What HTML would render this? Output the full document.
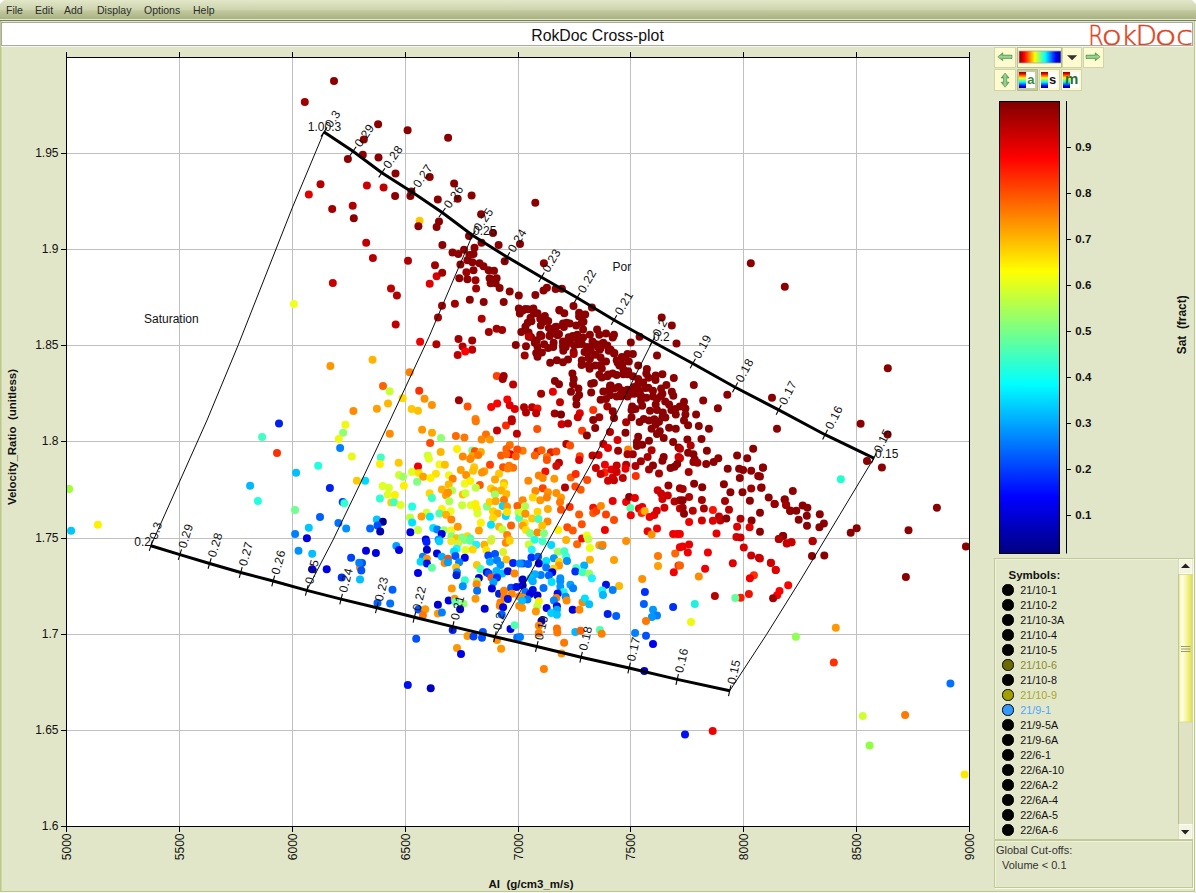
<!DOCTYPE html>
<html><head><meta charset="utf-8"><title>RokDoc Cross-plot</title>
<style>
html,body{margin:0;padding:0}
body{width:1196px;height:893px;overflow:hidden;background:#e2e6c8;font-family:"Liberation Sans",sans-serif;position:relative}
#menubar{position:absolute;left:0;top:0;width:1196px;height:20px;background:linear-gradient(#e2e7c8 0%,#cdd4ae 48%,#c1c99d 54%,#a9b283 95%,#e4e9cb 95%,#e4e9cb 100%);border-bottom:1px solid #76805a}
#menubar span{position:absolute;top:4px;font-size:10.5px;color:#2c2c2c;line-height:13px}
#leftedge{position:absolute;left:0;top:21px;width:1px;height:871px;background:#bcc78b;box-shadow:1px 0 0 #cfd6a9}
#rightedge{position:absolute;left:1194px;top:21px;width:1px;height:871px;background:#bcc78b;box-shadow:1px 0 0 #f6f8ec}
#cornl{position:absolute;left:0;top:0;width:0;height:0;border-top:4px solid #fff;border-right:4px solid transparent}
#cornr{position:absolute;left:1192px;top:0;width:0;height:0;border-top:4px solid #fff;border-left:4px solid transparent}
#bottomedge{position:absolute;left:0;top:891px;width:1195px;height:1px;background:#bcc78b;box-shadow:0 1px 0 #fbfcf6}
#title{position:absolute;left:1px;top:22px;width:1190px;height:22px;background:#fff;border:1px solid #a9a9a9;overflow:hidden;box-shadow:0 1px 0 #f4f6e8}
#title .t{position:absolute;left:0;width:1191px;top:3px;text-align:center;font-size:15.8px;line-height:20px;color:#111}
#logo{position:absolute;left:1089px;top:-6px;font-family:"DejaVu Sans Light","DejaVu Sans",sans-serif;font-weight:200;font-size:27px;line-height:32px;color:#e0421a;white-space:nowrap;letter-spacing:0px}
.btn{position:absolute;background:#fdfbcf;border:1px solid #cdd3a4;box-sizing:border-box}
#legend{position:absolute;left:994px;top:558px;width:199px;height:282px;border:1px solid #c1ca92;box-sizing:border-box;background:#e3e7ca;box-shadow:1px 1px 0 #f7f9ee, inset 1px 1px 0 #eef1dc}
.lr{position:absolute;left:7px;height:15px;line-height:15px;font-size:10.8px;padding-left:18.3px;white-space:nowrap}
.lr i{position:absolute;left:0.4px;top:1.2px;width:9.2px;height:9.2px;border-radius:50%;border:1px solid #000;}
#sym{position:absolute;left:13.5px;top:10px;font-size:11.5px;font-weight:bold;color:#111;line-height:13px}
#sb{position:absolute;left:1178px;top:559px;width:14px;height:280px;background:#dde1c2;border-left:1px solid #c4cb9c;box-sizing:border-box}
#cut{position:absolute;left:994px;top:840px;width:199px;height:48px;border:1px solid #c1ca92;box-shadow:1px 1px 0 #f7f9ee, inset 1px 1px 0 #eef1dc;box-sizing:border-box;font-size:11px;color:#333;line-height:15px}
</style></head><body>
<div id="menubar"><span style="left:6px">File</span><span style="left:35px">Edit</span><span style="left:64px">Add</span><span style="left:97px">Display</span><span style="left:144px">Options</span><span style="left:193px">Help</span></div>
<div id="leftedge"></div><div id="rightedge"></div><div id="bottomedge"></div><div id="cornl"></div><div id="cornr"></div>
<div id="title"><div class="t">RokDoc Cross-plot</div></div>
<svg width="1196" height="893" viewBox="0 0 1196 893" style="position:absolute;left:0;top:0;z-index:5;pointer-events:none" font-family="Liberation Sans, sans-serif">
<rect x="66.5" y="57.5" width="903.0" height="769.0" fill="#fff"/>
<path d="M179.5 57.5V826.5M292.5 57.5V826.5M405.5 57.5V826.5M518.5 57.5V826.5M630.5 57.5V826.5M743.5 57.5V826.5M856.5 57.5V826.5M66.5 730.5H969.5M66.5 634.5H969.5M66.5 538.5H969.5M66.5 441.5H969.5M66.5 345.5H969.5M66.5 249.5H969.5M66.5 153.5H969.5" stroke="#c0c0c0" stroke-width="1" fill="none"/>
<clipPath id="pc"><rect x="67.0" y="58.0" width="902.0" height="768.0"/></clipPath>
<g clip-path="url(#pc)">
<circle cx="576.2" cy="325.4" r="4" fill="#8b0000"/>
<circle cx="614.4" cy="353.1" r="4" fill="#8b0000"/>
<circle cx="530.5" cy="317.7" r="4" fill="#8b0000"/>
<circle cx="540.2" cy="334.8" r="4" fill="#8b0000"/>
<circle cx="621.8" cy="357.1" r="4" fill="#8b0000"/>
<circle cx="543.9" cy="321.2" r="4" fill="#8b0000"/>
<circle cx="632.9" cy="354.0" r="4" fill="#8b0000"/>
<circle cx="528.6" cy="332.5" r="4" fill="#8b0000"/>
<circle cx="599.5" cy="344.6" r="4" fill="#8b0000"/>
<circle cx="660.9" cy="396.1" r="4" fill="#8b0000"/>
<circle cx="655.5" cy="379.9" r="4" fill="#8b0000"/>
<circle cx="643.1" cy="382.6" r="4" fill="#8b0000"/>
<circle cx="622.3" cy="364.8" r="4" fill="#8b0000"/>
<circle cx="669.1" cy="427.8" r="4" fill="#8b0000"/>
<circle cx="603.3" cy="391.6" r="4" fill="#8b0000"/>
<circle cx="548.2" cy="321.1" r="4" fill="#8b0000"/>
<circle cx="665.4" cy="417.4" r="4" fill="#8b0000"/>
<circle cx="568.0" cy="359.5" r="4" fill="#8b0000"/>
<circle cx="549.6" cy="335.9" r="4" fill="#8b0000"/>
<circle cx="610.7" cy="385.6" r="4" fill="#8b0000"/>
<circle cx="679.8" cy="406.6" r="4" fill="#8b0000"/>
<circle cx="675.3" cy="408.9" r="4" fill="#8b0000"/>
<circle cx="588.5" cy="357.4" r="4" fill="#8b0000"/>
<circle cx="555.5" cy="326.9" r="4" fill="#8b0000"/>
<circle cx="579.1" cy="312.8" r="4" fill="#8b0000"/>
<circle cx="536.2" cy="352.9" r="4" fill="#8b0000"/>
<circle cx="563.3" cy="350.8" r="4" fill="#8b0000"/>
<circle cx="583.5" cy="321.8" r="4" fill="#8b0000"/>
<circle cx="601.8" cy="368.4" r="4" fill="#8b0000"/>
<circle cx="579.6" cy="340.1" r="4" fill="#8b0000"/>
<circle cx="673.3" cy="395.8" r="4" fill="#8b0000"/>
<circle cx="577.3" cy="334.7" r="4" fill="#8b0000"/>
<circle cx="671.4" cy="409.9" r="4" fill="#8b0000"/>
<circle cx="665.2" cy="401.4" r="4" fill="#8b0000"/>
<circle cx="557.6" cy="335.2" r="4" fill="#8b0000"/>
<circle cx="553.3" cy="332.3" r="4" fill="#8b0000"/>
<circle cx="635.5" cy="409.1" r="4" fill="#8b0000"/>
<circle cx="540.8" cy="325.5" r="4" fill="#8b0000"/>
<circle cx="563.2" cy="343.8" r="4" fill="#8b0000"/>
<circle cx="581.6" cy="365.1" r="4" fill="#8b0000"/>
<circle cx="608.2" cy="374.6" r="4" fill="#8b0000"/>
<circle cx="597.1" cy="329.6" r="4" fill="#8b0000"/>
<circle cx="648.5" cy="377.7" r="4" fill="#8b0000"/>
<circle cx="628.2" cy="371.2" r="4" fill="#8b0000"/>
<circle cx="610.1" cy="395.3" r="4" fill="#8b0000"/>
<circle cx="599.3" cy="374.7" r="4" fill="#8b0000"/>
<circle cx="643.8" cy="419.0" r="4" fill="#8b0000"/>
<circle cx="531.0" cy="337.0" r="4" fill="#8b0000"/>
<circle cx="659.0" cy="421.7" r="4" fill="#8b0000"/>
<circle cx="589.6" cy="368.8" r="4" fill="#8b0000"/>
<circle cx="610.7" cy="349.7" r="4" fill="#8b0000"/>
<circle cx="553.2" cy="347.1" r="4" fill="#8b0000"/>
<circle cx="617.7" cy="362.8" r="4" fill="#8b0000"/>
<circle cx="659.8" cy="431.3" r="4" fill="#8b0000"/>
<circle cx="536.8" cy="340.2" r="4" fill="#8b0000"/>
<circle cx="566.6" cy="322.7" r="4" fill="#8b0000"/>
<circle cx="620.6" cy="396.3" r="4" fill="#8b0000"/>
<circle cx="534.0" cy="313.4" r="4" fill="#8b0000"/>
<circle cx="599.6" cy="349.7" r="4" fill="#8b0000"/>
<circle cx="612.8" cy="336.7" r="4" fill="#8b0000"/>
<circle cx="574.1" cy="345.3" r="4" fill="#8b0000"/>
<circle cx="645.1" cy="388.0" r="4" fill="#8b0000"/>
<circle cx="590.8" cy="350.8" r="4" fill="#8b0000"/>
<circle cx="527.7" cy="322.7" r="4" fill="#8b0000"/>
<circle cx="563.9" cy="327.0" r="4" fill="#8b0000"/>
<circle cx="568.7" cy="337.2" r="4" fill="#8b0000"/>
<circle cx="573.6" cy="352.0" r="4" fill="#8b0000"/>
<circle cx="525.4" cy="308.9" r="4" fill="#8b0000"/>
<circle cx="572.7" cy="336.0" r="4" fill="#8b0000"/>
<circle cx="623.3" cy="374.2" r="4" fill="#8b0000"/>
<circle cx="653.0" cy="390.8" r="4" fill="#8b0000"/>
<circle cx="650.0" cy="410.7" r="4" fill="#8b0000"/>
<circle cx="662.8" cy="412.6" r="4" fill="#8b0000"/>
<circle cx="640.8" cy="395.4" r="4" fill="#8b0000"/>
<circle cx="559.3" cy="310.0" r="4" fill="#8b0000"/>
<circle cx="541.9" cy="352.5" r="4" fill="#8b0000"/>
<circle cx="618.5" cy="386.9" r="4" fill="#8b0000"/>
<circle cx="630.6" cy="393.8" r="4" fill="#8b0000"/>
<circle cx="334.0" cy="81.0" r="4" fill="#8b0000"/>
<circle cx="304.8" cy="102.1" r="4" fill="#a00000"/>
<circle cx="378.1" cy="124.3" r="4" fill="#8b0000"/>
<circle cx="407.6" cy="130.3" r="4" fill="#8b0000"/>
<circle cx="448.1" cy="137.8" r="4" fill="#8b0000"/>
<circle cx="363.8" cy="139.6" r="4" fill="#8b0000"/>
<circle cx="362.8" cy="154.7" r="4" fill="#8b0000"/>
<circle cx="347.9" cy="158.9" r="4" fill="#8b0000"/>
<circle cx="378.5" cy="157.5" r="4" fill="#8b0000"/>
<circle cx="395.5" cy="173.5" r="4" fill="#8b0000"/>
<circle cx="429.7" cy="177.1" r="4" fill="#8b0000"/>
<circle cx="454.1" cy="183.5" r="4" fill="#8b0000"/>
<circle cx="320.5" cy="184.3" r="4" fill="#b00000"/>
<circle cx="366.9" cy="185.5" r="4" fill="#d00000"/>
<circle cx="383.6" cy="187.4" r="4" fill="#c00000"/>
<circle cx="308.8" cy="194.6" r="4" fill="#e00000"/>
<circle cx="411.4" cy="191.4" r="4" fill="#8b0000"/>
<circle cx="410.4" cy="196.0" r="4" fill="#8b0000"/>
<circle cx="395.1" cy="196.0" r="4" fill="#8b0000"/>
<circle cx="437.8" cy="199.6" r="4" fill="#8b0000"/>
<circle cx="457.7" cy="198.8" r="4" fill="#8b0000"/>
<circle cx="471.6" cy="195.6" r="4" fill="#8b0000"/>
<circle cx="352.7" cy="205.7" r="4" fill="#b00000"/>
<circle cx="332.2" cy="209.1" r="4" fill="#a00000"/>
<circle cx="353.8" cy="218.2" r="4" fill="#8b0000"/>
<circle cx="481.1" cy="214.2" r="4" fill="#8b0000"/>
<circle cx="419.6" cy="220.8" r="4" fill="#ffc800"/>
<circle cx="418.4" cy="226.2" r="4" fill="#8b0000"/>
<circle cx="439.0" cy="221.4" r="4" fill="#8b0000"/>
<circle cx="436.6" cy="226.9" r="4" fill="#8b0000"/>
<circle cx="493.0" cy="232.9" r="4" fill="#8b0000"/>
<circle cx="469.0" cy="235.9" r="4" fill="#8b0000"/>
<circle cx="535.3" cy="202.7" r="4" fill="#8b0000"/>
<circle cx="366.2" cy="242.8" r="4" fill="#c00000"/>
<circle cx="372.9" cy="258.1" r="4" fill="#b40000"/>
<circle cx="408.0" cy="260.8" r="4" fill="#b00000"/>
<circle cx="332.8" cy="282.9" r="4" fill="#c80000"/>
<circle cx="391.0" cy="288.6" r="4" fill="#c00000"/>
<circle cx="396.9" cy="295.6" r="4" fill="#b40000"/>
<circle cx="293.9" cy="303.9" r="4" fill="#f0ff20"/>
<circle cx="395.7" cy="324.6" r="4" fill="#c00000"/>
<circle cx="420.1" cy="341.8" r="4" fill="#f00000"/>
<circle cx="436.4" cy="344.2" r="4" fill="#b00000"/>
<circle cx="429.7" cy="283.7" r="4" fill="#e00000"/>
<circle cx="436.6" cy="276.3" r="4" fill="#d80000"/>
<circle cx="442.2" cy="272.8" r="4" fill="#a00000"/>
<circle cx="435.0" cy="265.2" r="4" fill="#a00000"/>
<circle cx="442.4" cy="245.0" r="4" fill="#8b0000"/>
<circle cx="452.5" cy="252.5" r="4" fill="#8b0000"/>
<circle cx="458.3" cy="254.1" r="4" fill="#8b0000"/>
<circle cx="464.0" cy="249.7" r="4" fill="#8b0000"/>
<circle cx="474.5" cy="247.7" r="4" fill="#8b0000"/>
<circle cx="481.5" cy="242.8" r="4" fill="#8b0000"/>
<circle cx="498.6" cy="245.0" r="4" fill="#8b0000"/>
<circle cx="469.4" cy="255.1" r="4" fill="#8b0000"/>
<circle cx="473.5" cy="254.1" r="4" fill="#8b0000"/>
<circle cx="467.4" cy="260.2" r="4" fill="#8b0000"/>
<circle cx="460.4" cy="264.6" r="4" fill="#8b0000"/>
<circle cx="472.4" cy="262.2" r="4" fill="#8b0000"/>
<circle cx="479.5" cy="263.2" r="4" fill="#8b0000"/>
<circle cx="483.5" cy="266.2" r="4" fill="#8b0000"/>
<circle cx="488.6" cy="270.2" r="4" fill="#8b0000"/>
<circle cx="494.0" cy="270.8" r="4" fill="#8b0000"/>
<circle cx="466.4" cy="272.2" r="4" fill="#a00000"/>
<circle cx="473.5" cy="270.2" r="4" fill="#8b0000"/>
<circle cx="459.3" cy="278.3" r="4" fill="#8b0000"/>
<circle cx="467.4" cy="279.3" r="4" fill="#8b0000"/>
<circle cx="475.5" cy="280.3" r="4" fill="#a00000"/>
<circle cx="489.6" cy="278.3" r="4" fill="#8b0000"/>
<circle cx="496.6" cy="278.3" r="4" fill="#8b0000"/>
<circle cx="490.6" cy="283.3" r="4" fill="#8b0000"/>
<circle cx="495.6" cy="283.3" r="4" fill="#8b0000"/>
<circle cx="499.6" cy="288.0" r="4" fill="#8b0000"/>
<circle cx="476.1" cy="288.6" r="4" fill="#a00000"/>
<circle cx="509.7" cy="291.4" r="4" fill="#8b0000"/>
<circle cx="504.7" cy="261.2" r="4" fill="#8b0000"/>
<circle cx="518.8" cy="295.4" r="4" fill="#8b0000"/>
<circle cx="469.8" cy="299.8" r="4" fill="#8b0000"/>
<circle cx="483.7" cy="301.9" r="4" fill="#8b0000"/>
<circle cx="503.7" cy="302.1" r="4" fill="#8b0000"/>
<circle cx="454.9" cy="303.7" r="4" fill="#a00000"/>
<circle cx="442.0" cy="305.7" r="4" fill="#a00000"/>
<circle cx="518.8" cy="308.5" r="4" fill="#8b0000"/>
<circle cx="519.8" cy="313.6" r="4" fill="#8b0000"/>
<circle cx="438.0" cy="317.6" r="4" fill="#a80000"/>
<circle cx="481.7" cy="318.8" r="4" fill="#b00000"/>
<circle cx="496.6" cy="328.7" r="4" fill="#a00000"/>
<circle cx="502.1" cy="330.1" r="4" fill="#a00000"/>
<circle cx="488.8" cy="332.1" r="4" fill="#a00000"/>
<circle cx="458.5" cy="338.9" r="4" fill="#a00000"/>
<circle cx="472.2" cy="340.4" r="4" fill="#a00000"/>
<circle cx="515.8" cy="345.0" r="4" fill="#8b0000"/>
<circle cx="462.6" cy="346.4" r="4" fill="#b00000"/>
<circle cx="472.2" cy="349.8" r="4" fill="#c00000"/>
<circle cx="465.2" cy="351.4" r="4" fill="#ff0000"/>
<circle cx="457.7" cy="354.9" r="4" fill="#c00000"/>
<circle cx="372.5" cy="359.7" r="4" fill="#ffb400"/>
<circle cx="330.4" cy="365.9" r="4" fill="#ff9600"/>
<circle cx="409.6" cy="372.2" r="4" fill="#ff8000"/>
<circle cx="496.8" cy="376.0" r="4" fill="#ff4000"/>
<circle cx="503.7" cy="376.0" r="4" fill="#a00000"/>
<circle cx="502.7" cy="379.0" r="4" fill="#a00000"/>
<circle cx="513.1" cy="384.5" r="4" fill="#c00000"/>
<circle cx="383.0" cy="385.9" r="4" fill="#ff6000"/>
<circle cx="389.6" cy="391.3" r="4" fill="#c8ff30"/>
<circle cx="419.2" cy="390.7" r="4" fill="#ff3000"/>
<circle cx="402.7" cy="398.2" r="4" fill="#ffd800"/>
<circle cx="424.5" cy="398.8" r="4" fill="#ff9000"/>
<circle cx="507.3" cy="399.4" r="4" fill="#ff0000"/>
<circle cx="458.9" cy="400.2" r="4" fill="#a00000"/>
<circle cx="388.0" cy="403.4" r="4" fill="#ffb800"/>
<circle cx="431.9" cy="405.0" r="4" fill="#ff9000"/>
<circle cx="497.2" cy="403.4" r="4" fill="#ff0000"/>
<circle cx="491.2" cy="406.9" r="4" fill="#ff0000"/>
<circle cx="509.7" cy="405.2" r="4" fill="#e00000"/>
<circle cx="467.6" cy="406.4" r="4" fill="#ff5000"/>
<circle cx="376.9" cy="408.7" r="4" fill="#ffa000"/>
<circle cx="411.6" cy="408.9" r="4" fill="#ffc800"/>
<circle cx="418.0" cy="410.7" r="4" fill="#ffc000"/>
<circle cx="353.4" cy="411.1" r="4" fill="#ff8c00"/>
<circle cx="514.8" cy="408.9" r="4" fill="#e00000"/>
<circle cx="475.5" cy="418.9" r="4" fill="#ff8000"/>
<circle cx="511.7" cy="419.3" r="4" fill="#b40000"/>
<circle cx="520.0" cy="244.1" r="4" fill="#8b0000"/>
<circle cx="543.9" cy="263.2" r="4" fill="#8b0000"/>
<circle cx="546.9" cy="287.8" r="4" fill="#8b0000"/>
<circle cx="543.5" cy="290.5" r="4" fill="#8b0000"/>
<circle cx="535.4" cy="294.9" r="4" fill="#8b0000"/>
<circle cx="555.6" cy="289.1" r="4" fill="#8b0000"/>
<circle cx="561.9" cy="288.7" r="4" fill="#8b0000"/>
<circle cx="573.5" cy="305.9" r="4" fill="#8b0000"/>
<circle cx="591.9" cy="307.5" r="4" fill="#8b0000"/>
<circle cx="559.6" cy="310.6" r="4" fill="#8b0000"/>
<circle cx="564.3" cy="313.3" r="4" fill="#8b0000"/>
<circle cx="585.2" cy="314.6" r="4" fill="#8b0000"/>
<circle cx="579.1" cy="316.6" r="4" fill="#8b0000"/>
<circle cx="528.1" cy="309.3" r="4" fill="#8b0000"/>
<circle cx="533.4" cy="308.6" r="4" fill="#8b0000"/>
<circle cx="537.5" cy="313.3" r="4" fill="#8b0000"/>
<circle cx="544.9" cy="316.0" r="4" fill="#8b0000"/>
<circle cx="522.7" cy="310.6" r="4" fill="#8b0000"/>
<circle cx="540.2" cy="318.7" r="4" fill="#8b0000"/>
<circle cx="531.4" cy="321.3" r="4" fill="#8b0000"/>
<circle cx="525.4" cy="326.7" r="4" fill="#8b0000"/>
<circle cx="521.3" cy="332.1" r="4" fill="#8b0000"/>
<circle cx="581.8" cy="322.7" r="4" fill="#8b0000"/>
<circle cx="583.1" cy="329.4" r="4" fill="#8b0000"/>
<circle cx="569.7" cy="323.4" r="4" fill="#8b0000"/>
<circle cx="563.0" cy="323.4" r="4" fill="#8b0000"/>
<circle cx="556.3" cy="326.7" r="4" fill="#8b0000"/>
<circle cx="548.9" cy="328.1" r="4" fill="#8b0000"/>
<circle cx="550.2" cy="334.8" r="4" fill="#8b0000"/>
<circle cx="559.0" cy="334.1" r="4" fill="#8b0000"/>
<circle cx="541.5" cy="336.1" r="4" fill="#8b0000"/>
<circle cx="528.7" cy="336.8" r="4" fill="#b40000"/>
<circle cx="534.8" cy="342.8" r="4" fill="#8b0000"/>
<circle cx="526.0" cy="346.2" r="4" fill="#8b0000"/>
<circle cx="544.2" cy="344.2" r="4" fill="#8b0000"/>
<circle cx="553.6" cy="342.8" r="4" fill="#8b0000"/>
<circle cx="563.0" cy="341.5" r="4" fill="#8b0000"/>
<circle cx="565.7" cy="346.9" r="4" fill="#8b0000"/>
<circle cx="573.7" cy="337.5" r="4" fill="#8b0000"/>
<circle cx="577.8" cy="344.2" r="4" fill="#8b0000"/>
<circle cx="583.1" cy="337.5" r="4" fill="#8b0000"/>
<circle cx="589.9" cy="334.8" r="4" fill="#8b0000"/>
<circle cx="592.5" cy="341.5" r="4" fill="#8b0000"/>
<circle cx="599.3" cy="334.8" r="4" fill="#8b0000"/>
<circle cx="606.0" cy="333.4" r="4" fill="#8b0000"/>
<circle cx="614.0" cy="334.8" r="4" fill="#8b0000"/>
<circle cx="612.7" cy="337.5" r="4" fill="#8b0000"/>
<circle cx="603.3" cy="342.8" r="4" fill="#8b0000"/>
<circle cx="607.3" cy="345.5" r="4" fill="#8b0000"/>
<circle cx="597.9" cy="346.9" r="4" fill="#8b0000"/>
<circle cx="587.2" cy="346.9" r="4" fill="#8b0000"/>
<circle cx="630.8" cy="342.6" r="4" fill="#8b0000"/>
<circle cx="639.6" cy="336.8" r="4" fill="#8b0000"/>
<circle cx="661.7" cy="317.6" r="4" fill="#8b0000"/>
<circle cx="671.8" cy="325.6" r="4" fill="#8b0000"/>
<circle cx="676.5" cy="343.5" r="4" fill="#8b0000"/>
<circle cx="524.7" cy="355.4" r="4" fill="#a00000"/>
<circle cx="537.5" cy="346.7" r="4" fill="#8b0000"/>
<circle cx="537.5" cy="356.8" r="4" fill="#8b0000"/>
<circle cx="548.2" cy="348.1" r="4" fill="#8b0000"/>
<circle cx="563.0" cy="346.7" r="4" fill="#8b0000"/>
<circle cx="569.7" cy="342.7" r="4" fill="#8b0000"/>
<circle cx="573.7" cy="354.1" r="4" fill="#a80000"/>
<circle cx="581.8" cy="344.0" r="4" fill="#8b0000"/>
<circle cx="584.5" cy="352.1" r="4" fill="#8b0000"/>
<circle cx="589.9" cy="348.1" r="4" fill="#8b0000"/>
<circle cx="595.2" cy="344.0" r="4" fill="#8b0000"/>
<circle cx="600.6" cy="348.1" r="4" fill="#8b0000"/>
<circle cx="608.7" cy="350.7" r="4" fill="#8b0000"/>
<circle cx="595.2" cy="354.8" r="4" fill="#8b0000"/>
<circle cx="589.9" cy="358.8" r="4" fill="#8b0000"/>
<circle cx="581.8" cy="360.2" r="4" fill="#8b0000"/>
<circle cx="600.6" cy="357.5" r="4" fill="#8b0000"/>
<circle cx="606.0" cy="361.5" r="4" fill="#8b0000"/>
<circle cx="614.0" cy="353.4" r="4" fill="#8b0000"/>
<circle cx="616.7" cy="360.2" r="4" fill="#8b0000"/>
<circle cx="627.5" cy="354.1" r="4" fill="#8b0000"/>
<circle cx="624.8" cy="357.5" r="4" fill="#8b0000"/>
<circle cx="628.8" cy="361.5" r="4" fill="#8b0000"/>
<circle cx="657.0" cy="355.4" r="4" fill="#8b0000"/>
<circle cx="550.2" cy="362.8" r="4" fill="#8b0000"/>
<circle cx="556.9" cy="360.2" r="4" fill="#8b0000"/>
<circle cx="563.0" cy="362.2" r="4" fill="#8b0000"/>
<circle cx="588.5" cy="364.9" r="4" fill="#8b0000"/>
<circle cx="595.2" cy="365.5" r="4" fill="#8b0000"/>
<circle cx="600.6" cy="364.9" r="4" fill="#8b0000"/>
<circle cx="619.4" cy="365.5" r="4" fill="#8b0000"/>
<circle cx="623.4" cy="369.6" r="4" fill="#8b0000"/>
<circle cx="638.2" cy="365.5" r="4" fill="#8b0000"/>
<circle cx="646.9" cy="368.9" r="4" fill="#8b0000"/>
<circle cx="646.3" cy="373.6" r="4" fill="#8b0000"/>
<circle cx="572.4" cy="373.6" r="4" fill="#8b0000"/>
<circle cx="573.7" cy="379.0" r="4" fill="#8b0000"/>
<circle cx="573.1" cy="384.3" r="4" fill="#8b0000"/>
<circle cx="554.9" cy="381.0" r="4" fill="#8b0000"/>
<circle cx="559.0" cy="384.3" r="4" fill="#8b0000"/>
<circle cx="601.9" cy="377.6" r="4" fill="#8b0000"/>
<circle cx="607.3" cy="376.3" r="4" fill="#8b0000"/>
<circle cx="612.7" cy="373.6" r="4" fill="#8b0000"/>
<circle cx="616.7" cy="374.9" r="4" fill="#8b0000"/>
<circle cx="627.5" cy="374.3" r="4" fill="#8b0000"/>
<circle cx="632.8" cy="376.3" r="4" fill="#8b0000"/>
<circle cx="638.2" cy="379.0" r="4" fill="#8b0000"/>
<circle cx="655.7" cy="375.6" r="4" fill="#8b0000"/>
<circle cx="662.4" cy="374.3" r="4" fill="#8b0000"/>
<circle cx="673.8" cy="378.0" r="4" fill="#8b0000"/>
<circle cx="552.9" cy="391.7" r="4" fill="#e80000"/>
<circle cx="541.1" cy="393.7" r="4" fill="#a00000"/>
<circle cx="571.0" cy="391.7" r="4" fill="#8b0000"/>
<circle cx="578.4" cy="388.4" r="4" fill="#8b0000"/>
<circle cx="579.1" cy="395.1" r="4" fill="#8b0000"/>
<circle cx="576.4" cy="398.4" r="4" fill="#8b0000"/>
<circle cx="576.4" cy="404.5" r="4" fill="#8b0000"/>
<circle cx="591.2" cy="383.7" r="4" fill="#8b0000"/>
<circle cx="593.9" cy="383.0" r="4" fill="#8b0000"/>
<circle cx="591.2" cy="392.4" r="4" fill="#8b0000"/>
<circle cx="610.0" cy="385.7" r="4" fill="#8b0000"/>
<circle cx="614.0" cy="388.4" r="4" fill="#8b0000"/>
<circle cx="608.7" cy="390.4" r="4" fill="#8b0000"/>
<circle cx="622.1" cy="390.4" r="4" fill="#8b0000"/>
<circle cx="627.5" cy="389.7" r="4" fill="#8b0000"/>
<circle cx="634.2" cy="387.0" r="4" fill="#8b0000"/>
<circle cx="638.2" cy="384.3" r="4" fill="#8b0000"/>
<circle cx="616.7" cy="396.4" r="4" fill="#8b0000"/>
<circle cx="620.8" cy="393.7" r="4" fill="#8b0000"/>
<circle cx="627.5" cy="396.4" r="4" fill="#8b0000"/>
<circle cx="634.2" cy="393.7" r="4" fill="#8b0000"/>
<circle cx="639.6" cy="391.0" r="4" fill="#8b0000"/>
<circle cx="648.3" cy="387.7" r="4" fill="#8b0000"/>
<circle cx="661.1" cy="388.4" r="4" fill="#8b0000"/>
<circle cx="666.4" cy="385.0" r="4" fill="#8b0000"/>
<circle cx="671.8" cy="391.7" r="4" fill="#8b0000"/>
<circle cx="662.4" cy="393.7" r="4" fill="#8b0000"/>
<circle cx="653.0" cy="396.4" r="4" fill="#8b0000"/>
<circle cx="657.0" cy="399.1" r="4" fill="#8b0000"/>
<circle cx="560.0" cy="402.2" r="4" fill="#c00000"/>
<circle cx="524.0" cy="407.2" r="4" fill="#b00000"/>
<circle cx="532.1" cy="407.2" r="4" fill="#b80000"/>
<circle cx="537.5" cy="408.5" r="4" fill="#f01000"/>
<circle cx="526.0" cy="412.5" r="4" fill="#b00000"/>
<circle cx="536.1" cy="413.2" r="4" fill="#c00000"/>
<circle cx="600.6" cy="399.8" r="4" fill="#8b0000"/>
<circle cx="606.0" cy="399.1" r="4" fill="#8b0000"/>
<circle cx="607.3" cy="406.5" r="4" fill="#a80000"/>
<circle cx="593.2" cy="409.9" r="4" fill="#ff3000"/>
<circle cx="612.7" cy="411.2" r="4" fill="#8b0000"/>
<circle cx="614.0" cy="417.9" r="4" fill="#8b0000"/>
<circle cx="632.2" cy="406.5" r="4" fill="#8b0000"/>
<circle cx="631.5" cy="409.9" r="4" fill="#8b0000"/>
<circle cx="640.9" cy="400.5" r="4" fill="#8b0000"/>
<circle cx="642.2" cy="405.8" r="4" fill="#8b0000"/>
<circle cx="646.3" cy="397.8" r="4" fill="#8b0000"/>
<circle cx="655.7" cy="404.5" r="4" fill="#8b0000"/>
<circle cx="657.0" cy="409.9" r="4" fill="#8b0000"/>
<circle cx="669.1" cy="404.5" r="4" fill="#8b0000"/>
<circle cx="675.8" cy="414.6" r="4" fill="#8b0000"/>
<circle cx="554.7" cy="413.5" r="4" fill="#a00000"/>
<circle cx="561.0" cy="414.6" r="4" fill="#800000"/>
<circle cx="579.8" cy="413.2" r="4" fill="#e00000"/>
<circle cx="577.8" cy="417.2" r="4" fill="#c80000"/>
<circle cx="599.3" cy="417.2" r="4" fill="#a00000"/>
<circle cx="593.2" cy="419.9" r="4" fill="#8b0000"/>
<circle cx="561.6" cy="424.2" r="4" fill="#d00000"/>
<circle cx="568.0" cy="423.6" r="4" fill="#b00000"/>
<circle cx="595.2" cy="428.0" r="4" fill="#8b0000"/>
<circle cx="626.1" cy="422.2" r="4" fill="#a80000"/>
<circle cx="631.5" cy="417.2" r="4" fill="#8b0000"/>
<circle cx="639.6" cy="421.9" r="4" fill="#8b0000"/>
<circle cx="649.0" cy="420.6" r="4" fill="#8b0000"/>
<circle cx="654.3" cy="419.3" r="4" fill="#8b0000"/>
<circle cx="662.4" cy="417.2" r="4" fill="#8b0000"/>
<circle cx="655.7" cy="424.6" r="4" fill="#8b0000"/>
<circle cx="651.6" cy="428.7" r="4" fill="#8b0000"/>
<circle cx="675.8" cy="428.7" r="4" fill="#8b0000"/>
<circle cx="537.2" cy="429.1" r="4" fill="#ff5000"/>
<circle cx="582.1" cy="430.7" r="4" fill="#ff3800"/>
<circle cx="586.9" cy="435.6" r="4" fill="#8b0000"/>
<circle cx="610.0" cy="432.0" r="4" fill="#b00000"/>
<circle cx="625.5" cy="432.7" r="4" fill="#8b0000"/>
<circle cx="617.5" cy="440.1" r="4" fill="#d80000"/>
<circle cx="638.2" cy="436.7" r="4" fill="#8b0000"/>
<circle cx="636.9" cy="442.1" r="4" fill="#8b0000"/>
<circle cx="657.0" cy="434.0" r="4" fill="#8b0000"/>
<circle cx="663.7" cy="438.1" r="4" fill="#8b0000"/>
<circle cx="649.0" cy="440.8" r="4" fill="#8b0000"/>
<circle cx="673.1" cy="442.1" r="4" fill="#8b0000"/>
<circle cx="566.3" cy="444.1" r="4" fill="#b00000"/>
<circle cx="570.1" cy="445.5" r="4" fill="#ff5000"/>
<circle cx="603.3" cy="444.1" r="4" fill="#c00000"/>
<circle cx="608.0" cy="448.1" r="4" fill="#e80000"/>
<circle cx="522.7" cy="450.8" r="4" fill="#ff7800"/>
<circle cx="537.5" cy="451.5" r="4" fill="#e02000"/>
<circle cx="541.5" cy="450.2" r="4" fill="#ff6000"/>
<circle cx="550.9" cy="452.2" r="4" fill="#e02000"/>
<circle cx="556.3" cy="451.5" r="4" fill="#ff4800"/>
<circle cx="534.8" cy="455.5" r="4" fill="#ff6000"/>
<circle cx="546.9" cy="456.9" r="4" fill="#ff7000"/>
<circle cx="579.8" cy="456.2" r="4" fill="#ff4000"/>
<circle cx="592.5" cy="455.5" r="4" fill="#c00000"/>
<circle cx="598.6" cy="454.9" r="4" fill="#d80000"/>
<circle cx="618.1" cy="450.8" r="4" fill="#a00000"/>
<circle cx="628.1" cy="449.5" r="4" fill="#ff8000"/>
<circle cx="627.5" cy="454.2" r="4" fill="#a80000"/>
<circle cx="632.8" cy="454.2" r="4" fill="#a00000"/>
<circle cx="636.9" cy="446.1" r="4" fill="#8b0000"/>
<circle cx="642.2" cy="444.8" r="4" fill="#8b0000"/>
<circle cx="651.6" cy="450.2" r="4" fill="#b00000"/>
<circle cx="647.6" cy="456.9" r="4" fill="#a80000"/>
<circle cx="663.7" cy="456.9" r="4" fill="#8b0000"/>
<circle cx="678.5" cy="447.5" r="4" fill="#8b0000"/>
<circle cx="678.5" cy="456.9" r="4" fill="#c00000"/>
<circle cx="750.8" cy="263.2" r="4" fill="#8b0000"/>
<circle cx="784.8" cy="286.7" r="4" fill="#8b0000"/>
<circle cx="693.8" cy="385.0" r="4" fill="#8b0000"/>
<circle cx="727.3" cy="394.7" r="4" fill="#8b0000"/>
<circle cx="772.0" cy="397.8" r="4" fill="#8b0000"/>
<circle cx="703.2" cy="400.5" r="4" fill="#8b0000"/>
<circle cx="717.9" cy="408.2" r="4" fill="#8b0000"/>
<circle cx="684.0" cy="401.8" r="4" fill="#8b0000"/>
<circle cx="685.4" cy="408.5" r="4" fill="#8b0000"/>
<circle cx="685.4" cy="414.6" r="4" fill="#8b0000"/>
<circle cx="696.1" cy="414.6" r="4" fill="#8b0000"/>
<circle cx="684.0" cy="420.6" r="4" fill="#8b0000"/>
<circle cx="688.1" cy="425.3" r="4" fill="#8b0000"/>
<circle cx="698.8" cy="426.0" r="4" fill="#8b0000"/>
<circle cx="708.9" cy="428.7" r="4" fill="#8b0000"/>
<circle cx="777.0" cy="428.7" r="4" fill="#8b0000"/>
<circle cx="687.4" cy="439.4" r="4" fill="#8b0000"/>
<circle cx="701.5" cy="439.1" r="4" fill="#8b0000"/>
<circle cx="690.7" cy="445.5" r="4" fill="#b00000"/>
<circle cx="753.2" cy="448.8" r="4" fill="#8b0000"/>
<circle cx="706.9" cy="450.8" r="4" fill="#8b0000"/>
<circle cx="688.1" cy="452.8" r="4" fill="#8b0000"/>
<circle cx="693.4" cy="454.2" r="4" fill="#8b0000"/>
<circle cx="737.1" cy="455.5" r="4" fill="#8b0000"/>
<circle cx="718.3" cy="458.2" r="4" fill="#8b0000"/>
<circle cx="747.2" cy="458.2" r="4" fill="#8b0000"/>
<circle cx="680.0" cy="448.8" r="4" fill="#b40000"/>
<circle cx="694.8" cy="459.6" r="4" fill="#8b0000"/>
<circle cx="680.0" cy="458.2" r="4" fill="#d00000"/>
<circle cx="887.8" cy="368.2" r="4" fill="#8b0000"/>
<circle cx="860.6" cy="423.8" r="4" fill="#8b0000"/>
<circle cx="887.6" cy="434.5" r="4" fill="#8b0000"/>
<circle cx="867.0" cy="460.9" r="4" fill="#8b0000"/>
<circle cx="881.9" cy="467.6" r="4" fill="#8b0000"/>
<circle cx="840.8" cy="479.2" r="4" fill="#20ffd0"/>
<circle cx="763.0" cy="467.8" r="4" fill="#8b0000"/>
<circle cx="760.0" cy="476.4" r="4" fill="#8b0000"/>
<circle cx="761.6" cy="487.5" r="4" fill="#8b0000"/>
<circle cx="792.8" cy="490.9" r="4" fill="#8b0000"/>
<circle cx="768.7" cy="497.6" r="4" fill="#8b0000"/>
<circle cx="784.6" cy="499.6" r="4" fill="#8b0000"/>
<circle cx="774.5" cy="504.0" r="4" fill="#8b0000"/>
<circle cx="786.2" cy="505.0" r="4" fill="#8b0000"/>
<circle cx="802.7" cy="505.6" r="4" fill="#8b0000"/>
<circle cx="807.4" cy="507.7" r="4" fill="#8b0000"/>
<circle cx="790.2" cy="511.1" r="4" fill="#8b0000"/>
<circle cx="796.3" cy="510.7" r="4" fill="#8b0000"/>
<circle cx="760.0" cy="512.7" r="4" fill="#8b0000"/>
<circle cx="806.8" cy="515.7" r="4" fill="#8b0000"/>
<circle cx="819.8" cy="514.3" r="4" fill="#8b0000"/>
<circle cx="798.7" cy="519.7" r="4" fill="#8b0000"/>
<circle cx="823.9" cy="523.4" r="4" fill="#8b0000"/>
<circle cx="807.0" cy="525.8" r="4" fill="#8b0000"/>
<circle cx="819.4" cy="527.2" r="4" fill="#8b0000"/>
<circle cx="856.7" cy="528.2" r="4" fill="#8b0000"/>
<circle cx="850.7" cy="532.8" r="4" fill="#8b0000"/>
<circle cx="936.9" cy="507.7" r="4" fill="#8b0000"/>
<circle cx="908.5" cy="530.2" r="4" fill="#8b0000"/>
<circle cx="760.0" cy="531.8" r="4" fill="#8b0000"/>
<circle cx="782.8" cy="535.9" r="4" fill="#980000"/>
<circle cx="778.7" cy="538.9" r="4" fill="#b80000"/>
<circle cx="786.8" cy="543.3" r="4" fill="#d80000"/>
<circle cx="791.6" cy="542.3" r="4" fill="#d00000"/>
<circle cx="812.6" cy="541.1" r="4" fill="#c80000"/>
<circle cx="965.9" cy="546.5" r="4" fill="#8b0000"/>
<circle cx="812.0" cy="556.0" r="4" fill="#8b0000"/>
<circle cx="824.3" cy="555.6" r="4" fill="#8b0000"/>
<circle cx="760.0" cy="558.4" r="4" fill="#e00000"/>
<circle cx="770.9" cy="562.9" r="4" fill="#e00000"/>
<circle cx="775.7" cy="570.1" r="4" fill="#f00000"/>
<circle cx="905.9" cy="577.0" r="4" fill="#8b0000"/>
<circle cx="788.2" cy="585.2" r="4" fill="#ff0000"/>
<circle cx="779.5" cy="590.9" r="4" fill="#ff0000"/>
<circle cx="777.1" cy="595.3" r="4" fill="#ff0000"/>
<circle cx="773.1" cy="598.3" r="4" fill="#a00000"/>
<circle cx="389.8" cy="433.7" r="4" fill="#ff8c00"/>
<circle cx="422.1" cy="429.7" r="4" fill="#ff9800"/>
<circle cx="432.0" cy="432.8" r="4" fill="#ffa800"/>
<circle cx="441.0" cy="438.1" r="4" fill="#90ff70"/>
<circle cx="430.1" cy="443.1" r="4" fill="#ff4800"/>
<circle cx="455.9" cy="435.9" r="4" fill="#ff6800"/>
<circle cx="464.4" cy="437.5" r="4" fill="#ff7800"/>
<circle cx="475.8" cy="421.3" r="4" fill="#ff7800"/>
<circle cx="486.0" cy="434.5" r="4" fill="#ff7000"/>
<circle cx="481.6" cy="439.5" r="4" fill="#ff8800"/>
<circle cx="490.0" cy="439.5" r="4" fill="#ff9800"/>
<circle cx="497.0" cy="430.5" r="4" fill="#c80000"/>
<circle cx="506.0" cy="425.4" r="4" fill="#ff2800"/>
<circle cx="511.8" cy="421.3" r="4" fill="#c00000"/>
<circle cx="516.9" cy="433.8" r="4" fill="#c00000"/>
<circle cx="380.8" cy="457.6" r="4" fill="#40ffc0"/>
<circle cx="379.9" cy="464.1" r="4" fill="#fff000"/>
<circle cx="398.7" cy="462.7" r="4" fill="#ffc800"/>
<circle cx="427.8" cy="455.6" r="4" fill="#d0ff30"/>
<circle cx="428.9" cy="458.7" r="4" fill="#e0ff20"/>
<circle cx="440.7" cy="452.0" r="4" fill="#ffb800"/>
<circle cx="457.0" cy="448.9" r="4" fill="#fff000"/>
<circle cx="472.2" cy="450.6" r="4" fill="#80ff80"/>
<circle cx="474.9" cy="451.2" r="4" fill="#ff5000"/>
<circle cx="480.9" cy="452.0" r="4" fill="#ffa800"/>
<circle cx="462.8" cy="456.5" r="4" fill="#ff8800"/>
<circle cx="472.2" cy="456.3" r="4" fill="#ffa000"/>
<circle cx="470.2" cy="459.0" r="4" fill="#ff8800"/>
<circle cx="478.2" cy="454.9" r="4" fill="#ff7800"/>
<circle cx="509.8" cy="444.9" r="4" fill="#ff7000"/>
<circle cx="506.4" cy="448.9" r="4" fill="#ff6000"/>
<circle cx="501.1" cy="455.6" r="4" fill="#ff5800"/>
<circle cx="510.5" cy="454.3" r="4" fill="#f00000"/>
<circle cx="517.2" cy="449.6" r="4" fill="#ff4800"/>
<circle cx="515.8" cy="456.3" r="4" fill="#ff6000"/>
<circle cx="506.4" cy="454.3" r="4" fill="#ff6800"/>
<circle cx="418.0" cy="466.6" r="4" fill="#f00000"/>
<circle cx="439.3" cy="464.6" r="4" fill="#f0f820"/>
<circle cx="444.9" cy="464.7" r="4" fill="#ffc000"/>
<circle cx="490.0" cy="464.7" r="4" fill="#ff4000"/>
<circle cx="503.1" cy="467.3" r="4" fill="#ff5000"/>
<circle cx="509.1" cy="465.7" r="4" fill="#ff7800"/>
<circle cx="513.1" cy="467.7" r="4" fill="#ff7000"/>
<circle cx="507.8" cy="468.4" r="4" fill="#ff8000"/>
<circle cx="412.0" cy="472.0" r="4" fill="#e0ff20"/>
<circle cx="418.8" cy="473.1" r="4" fill="#ffe000"/>
<circle cx="423.1" cy="476.7" r="4" fill="#ffa000"/>
<circle cx="399.0" cy="475.1" r="4" fill="#d0ff30"/>
<circle cx="403.0" cy="476.7" r="4" fill="#a0ff60"/>
<circle cx="417.1" cy="481.8" r="4" fill="#80ff80"/>
<circle cx="435.9" cy="473.7" r="4" fill="#ffe000"/>
<circle cx="430.5" cy="478.0" r="4" fill="#fff000"/>
<circle cx="448.9" cy="475.3" r="4" fill="#f0f820"/>
<circle cx="452.7" cy="478.7" r="4" fill="#ff8000"/>
<circle cx="460.8" cy="470.0" r="4" fill="#ffa000"/>
<circle cx="466.1" cy="475.1" r="4" fill="#ff9000"/>
<circle cx="474.2" cy="467.3" r="4" fill="#ffc800"/>
<circle cx="473.1" cy="470.8" r="4" fill="#ffc000"/>
<circle cx="484.3" cy="471.3" r="4" fill="#ffa000"/>
<circle cx="482.0" cy="472.4" r="4" fill="#ff9000"/>
<circle cx="499.0" cy="473.7" r="4" fill="#ffc800"/>
<circle cx="495.0" cy="479.4" r="4" fill="#ffa800"/>
<circle cx="504.0" cy="482.9" r="4" fill="#ffb800"/>
<circle cx="365.1" cy="480.7" r="4" fill="#00d8ff"/>
<circle cx="382.6" cy="486.1" r="4" fill="#e0ff20"/>
<circle cx="388.9" cy="487.8" r="4" fill="#d8ff28"/>
<circle cx="403.9" cy="485.8" r="4" fill="#fff000"/>
<circle cx="448.7" cy="484.5" r="4" fill="#ffb800"/>
<circle cx="441.9" cy="489.6" r="4" fill="#ffb000"/>
<circle cx="452.0" cy="490.5" r="4" fill="#b0ff50"/>
<circle cx="446.0" cy="495.2" r="4" fill="#ffa000"/>
<circle cx="448.0" cy="492.5" r="4" fill="#ff9000"/>
<circle cx="464.8" cy="483.8" r="4" fill="#f0f820"/>
<circle cx="470.2" cy="481.1" r="4" fill="#fff000"/>
<circle cx="479.8" cy="484.9" r="4" fill="#ff5800"/>
<circle cx="475.8" cy="487.8" r="4" fill="#c0ff40"/>
<circle cx="462.8" cy="494.6" r="4" fill="#ffc000"/>
<circle cx="465.5" cy="493.2" r="4" fill="#d0ff30"/>
<circle cx="491.0" cy="488.5" r="4" fill="#ffd000"/>
<circle cx="494.3" cy="490.5" r="4" fill="#ffa800"/>
<circle cx="503.7" cy="485.8" r="4" fill="#ffe000"/>
<circle cx="501.1" cy="490.5" r="4" fill="#ffb000"/>
<circle cx="506.4" cy="493.9" r="4" fill="#ffb800"/>
<circle cx="495.0" cy="494.6" r="4" fill="#a0ff60"/>
<circle cx="387.8" cy="494.6" r="4" fill="#e0ff20"/>
<circle cx="394.9" cy="495.0" r="4" fill="#fff000"/>
<circle cx="379.9" cy="498.6" r="4" fill="#30ffd0"/>
<circle cx="429.6" cy="493.2" r="4" fill="#ffd800"/>
<circle cx="431.9" cy="497.9" r="4" fill="#40ffc0"/>
<circle cx="391.2" cy="502.6" r="4" fill="#ffd000"/>
<circle cx="393.9" cy="502.2" r="4" fill="#40ffc0"/>
<circle cx="400.6" cy="504.9" r="4" fill="#e0ff20"/>
<circle cx="412.1" cy="506.6" r="4" fill="#20ffe0"/>
<circle cx="449.3" cy="501.3" r="4" fill="#b0ff50"/>
<circle cx="462.1" cy="505.3" r="4" fill="#c8ff38"/>
<circle cx="470.8" cy="505.3" r="4" fill="#e0ff20"/>
<circle cx="475.5" cy="504.0" r="4" fill="#fff000"/>
<circle cx="476.9" cy="508.7" r="4" fill="#fff000"/>
<circle cx="477.5" cy="513.4" r="4" fill="#d8ff28"/>
<circle cx="486.9" cy="506.6" r="4" fill="#80ff80"/>
<circle cx="489.6" cy="501.9" r="4" fill="#ffd000"/>
<circle cx="495.7" cy="501.3" r="4" fill="#ffa800"/>
<circle cx="504.0" cy="499.9" r="4" fill="#ff7800"/>
<circle cx="502.7" cy="506.0" r="4" fill="#00d8ff"/>
<circle cx="507.1" cy="506.6" r="4" fill="#ff9800"/>
<circle cx="517.4" cy="506.0" r="4" fill="#ff6000"/>
<circle cx="493.0" cy="511.3" r="4" fill="#ffd000"/>
<circle cx="497.7" cy="513.4" r="4" fill="#ffb000"/>
<circle cx="505.8" cy="516.1" r="4" fill="#00d8ff"/>
<circle cx="507.1" cy="512.0" r="4" fill="#ffe000"/>
<circle cx="518.5" cy="512.7" r="4" fill="#c0ff40"/>
<circle cx="519.2" cy="518.1" r="4" fill="#40ffc0"/>
<circle cx="493.0" cy="518.1" r="4" fill="#ffd800"/>
<circle cx="441.9" cy="508.9" r="4" fill="#fff000"/>
<circle cx="450.7" cy="511.3" r="4" fill="#e8ff20"/>
<circle cx="439.3" cy="513.4" r="4" fill="#50ffb0"/>
<circle cx="446.0" cy="514.7" r="4" fill="#ffb000"/>
<circle cx="451.3" cy="519.4" r="4" fill="#ff8800"/>
<circle cx="426.5" cy="512.7" r="4" fill="#d8ff28"/>
<circle cx="421.5" cy="516.5" r="4" fill="#ffa000"/>
<circle cx="429.9" cy="516.7" r="4" fill="#00e8ff"/>
<circle cx="410.0" cy="517.4" r="4" fill="#c0ff40"/>
<circle cx="412.1" cy="522.4" r="4" fill="#00e0ff"/>
<circle cx="376.8" cy="519.4" r="4" fill="#00c8ff"/>
<circle cx="382.8" cy="521.7" r="4" fill="#000090"/>
<circle cx="377.5" cy="525.5" r="4" fill="#0050ff"/>
<circle cx="370.1" cy="528.5" r="4" fill="#0068ff"/>
<circle cx="380.2" cy="531.5" r="4" fill="#0000b0"/>
<circle cx="410.4" cy="532.2" r="4" fill="#0000e0"/>
<circle cx="418.0" cy="529.9" r="4" fill="#c8ff38"/>
<circle cx="433.2" cy="528.1" r="4" fill="#00e0ff"/>
<circle cx="437.2" cy="529.5" r="4" fill="#0080ff"/>
<circle cx="444.0" cy="530.2" r="4" fill="#a0ff60"/>
<circle cx="441.7" cy="533.9" r="4" fill="#0000d8"/>
<circle cx="451.3" cy="530.2" r="4" fill="#f0f820"/>
<circle cx="457.8" cy="526.8" r="4" fill="#ff9800"/>
<circle cx="480.9" cy="522.8" r="4" fill="#fff000"/>
<circle cx="491.0" cy="524.8" r="4" fill="#00e0ff"/>
<circle cx="478.9" cy="530.4" r="4" fill="#ffa000"/>
<circle cx="499.0" cy="526.8" r="4" fill="#ffb800"/>
<circle cx="502.4" cy="529.5" r="4" fill="#c0ff40"/>
<circle cx="511.1" cy="525.5" r="4" fill="#ff6000"/>
<circle cx="507.1" cy="534.9" r="4" fill="#ff8000"/>
<circle cx="451.3" cy="536.2" r="4" fill="#80ff80"/>
<circle cx="456.7" cy="538.2" r="4" fill="#ffc000"/>
<circle cx="462.1" cy="537.5" r="4" fill="#80ff80"/>
<circle cx="467.5" cy="536.2" r="4" fill="#ffd800"/>
<circle cx="470.2" cy="538.5" r="4" fill="#40ffc0"/>
<circle cx="491.6" cy="538.9" r="4" fill="#c0ff40"/>
<circle cx="509.1" cy="539.6" r="4" fill="#ffa000"/>
<circle cx="425.8" cy="539.6" r="4" fill="#0000e0"/>
<circle cx="438.6" cy="539.6" r="4" fill="#0090ff"/>
<circle cx="546.9" cy="460.0" r="4" fill="#ff5000"/>
<circle cx="559.0" cy="462.7" r="4" fill="#c00000"/>
<circle cx="556.3" cy="466.0" r="4" fill="#d01000"/>
<circle cx="579.1" cy="460.0" r="4" fill="#e00000"/>
<circle cx="545.3" cy="471.4" r="4" fill="#f01000"/>
<circle cx="538.8" cy="475.4" r="4" fill="#ff8000"/>
<circle cx="542.8" cy="478.1" r="4" fill="#ff8800"/>
<circle cx="528.3" cy="480.8" r="4" fill="#ff8800"/>
<circle cx="554.3" cy="478.8" r="4" fill="#ff9800"/>
<circle cx="570.8" cy="477.5" r="4" fill="#ff6000"/>
<circle cx="575.7" cy="474.1" r="4" fill="#ff2800"/>
<circle cx="587.2" cy="479.9" r="4" fill="#ff4800"/>
<circle cx="565.0" cy="487.5" r="4" fill="#b00000"/>
<circle cx="575.3" cy="486.6" r="4" fill="#ff4800"/>
<circle cx="580.7" cy="489.8" r="4" fill="#ff5800"/>
<circle cx="595.9" cy="468.1" r="4" fill="#c80000"/>
<circle cx="604.9" cy="464.7" r="4" fill="#f00000"/>
<circle cx="604.6" cy="472.8" r="4" fill="#ff2000"/>
<circle cx="600.6" cy="474.1" r="4" fill="#d00000"/>
<circle cx="611.3" cy="469.4" r="4" fill="#e00000"/>
<circle cx="616.7" cy="465.4" r="4" fill="#c80000"/>
<circle cx="616.7" cy="472.1" r="4" fill="#d00000"/>
<circle cx="612.7" cy="477.5" r="4" fill="#d80000"/>
<circle cx="608.0" cy="480.8" r="4" fill="#d00000"/>
<circle cx="614.0" cy="480.2" r="4" fill="#c80000"/>
<circle cx="622.8" cy="478.1" r="4" fill="#c00000"/>
<circle cx="626.1" cy="464.7" r="4" fill="#b80000"/>
<circle cx="625.5" cy="468.7" r="4" fill="#e80000"/>
<circle cx="635.5" cy="466.0" r="4" fill="#b00000"/>
<circle cx="635.8" cy="476.1" r="4" fill="#ff3000"/>
<circle cx="640.9" cy="461.3" r="4" fill="#a00000"/>
<circle cx="649.0" cy="469.4" r="4" fill="#a80000"/>
<circle cx="653.0" cy="465.4" r="4" fill="#900000"/>
<circle cx="659.0" cy="473.4" r="4" fill="#a80000"/>
<circle cx="662.4" cy="460.7" r="4" fill="#900000"/>
<circle cx="670.5" cy="468.1" r="4" fill="#8b0000"/>
<circle cx="677.2" cy="464.0" r="4" fill="#8b0000"/>
<circle cx="674.5" cy="466.7" r="4" fill="#8b0000"/>
<circle cx="668.4" cy="485.5" r="4" fill="#980000"/>
<circle cx="679.9" cy="488.2" r="4" fill="#a00000"/>
<circle cx="535.4" cy="490.9" r="4" fill="#ff8800"/>
<circle cx="542.8" cy="488.2" r="4" fill="#ff4000"/>
<circle cx="547.9" cy="492.2" r="4" fill="#ff9000"/>
<circle cx="556.3" cy="492.9" r="4" fill="#ff9000"/>
<circle cx="532.8" cy="497.6" r="4" fill="#ffd800"/>
<circle cx="540.2" cy="500.3" r="4" fill="#ff9800"/>
<circle cx="546.9" cy="497.6" r="4" fill="#ff8000"/>
<circle cx="561.0" cy="497.6" r="4" fill="#ff9800"/>
<circle cx="560.0" cy="502.3" r="4" fill="#ff7800"/>
<circle cx="522.7" cy="500.3" r="4" fill="#ff8800"/>
<circle cx="525.1" cy="506.3" r="4" fill="#b0ff50"/>
<circle cx="521.3" cy="512.4" r="4" fill="#d0ff30"/>
<circle cx="525.4" cy="513.7" r="4" fill="#ff9000"/>
<circle cx="537.5" cy="511.7" r="4" fill="#ffd800"/>
<circle cx="547.9" cy="509.0" r="4" fill="#ffa800"/>
<circle cx="561.0" cy="509.7" r="4" fill="#ff5000"/>
<circle cx="569.7" cy="507.0" r="4" fill="#ff3000"/>
<circle cx="532.1" cy="518.4" r="4" fill="#ffc800"/>
<circle cx="538.5" cy="519.1" r="4" fill="#40ffc0"/>
<circle cx="547.5" cy="521.5" r="4" fill="#ff8800"/>
<circle cx="524.7" cy="523.1" r="4" fill="#ffe000"/>
<circle cx="542.2" cy="525.8" r="4" fill="#ffc000"/>
<circle cx="522.7" cy="525.8" r="4" fill="#ffa000"/>
<circle cx="526.0" cy="529.9" r="4" fill="#ffe000"/>
<circle cx="530.1" cy="533.2" r="4" fill="#80ff80"/>
<circle cx="537.5" cy="532.5" r="4" fill="#ff8800"/>
<circle cx="543.9" cy="533.2" r="4" fill="#80ff80"/>
<circle cx="558.3" cy="529.9" r="4" fill="#fff000"/>
<circle cx="567.3" cy="527.2" r="4" fill="#ff4800"/>
<circle cx="572.8" cy="530.5" r="4" fill="#ff5800"/>
<circle cx="579.1" cy="514.4" r="4" fill="#ff5800"/>
<circle cx="581.8" cy="524.2" r="4" fill="#ff5000"/>
<circle cx="593.2" cy="507.7" r="4" fill="#f01000"/>
<circle cx="593.2" cy="513.1" r="4" fill="#ff5800"/>
<circle cx="596.3" cy="511.0" r="4" fill="#ff4000"/>
<circle cx="600.9" cy="505.9" r="4" fill="#ff8800"/>
<circle cx="606.0" cy="514.4" r="4" fill="#ff4000"/>
<circle cx="614.0" cy="520.0" r="4" fill="#ff4800"/>
<circle cx="612.7" cy="501.0" r="4" fill="#e80000"/>
<circle cx="626.1" cy="501.9" r="4" fill="#f00000"/>
<circle cx="629.1" cy="496.9" r="4" fill="#900000"/>
<circle cx="634.9" cy="497.9" r="4" fill="#e80000"/>
<circle cx="630.4" cy="508.0" r="4" fill="#50ffb0"/>
<circle cx="630.8" cy="515.3" r="4" fill="#f00000"/>
<circle cx="604.9" cy="529.9" r="4" fill="#f00000"/>
<circle cx="638.9" cy="508.4" r="4" fill="#e00000"/>
<circle cx="642.2" cy="507.0" r="4" fill="#e80000"/>
<circle cx="641.6" cy="513.1" r="4" fill="#ff2800"/>
<circle cx="644.7" cy="511.0" r="4" fill="#ffb000"/>
<circle cx="649.6" cy="517.1" r="4" fill="#f00000"/>
<circle cx="654.3" cy="515.1" r="4" fill="#e80000"/>
<circle cx="656.8" cy="510.8" r="4" fill="#d80000"/>
<circle cx="664.4" cy="507.7" r="4" fill="#d00000"/>
<circle cx="657.7" cy="490.2" r="4" fill="#d00000"/>
<circle cx="661.1" cy="493.6" r="4" fill="#c80000"/>
<circle cx="662.4" cy="499.0" r="4" fill="#d00000"/>
<circle cx="667.8" cy="495.6" r="4" fill="#c80000"/>
<circle cx="674.5" cy="501.6" r="4" fill="#b80000"/>
<circle cx="679.9" cy="500.3" r="4" fill="#a00000"/>
<circle cx="679.9" cy="508.4" r="4" fill="#c80000"/>
<circle cx="657.0" cy="528.5" r="4" fill="#f00000"/>
<circle cx="647.6" cy="531.2" r="4" fill="#f00000"/>
<circle cx="651.6" cy="534.6" r="4" fill="#ff9000"/>
<circle cx="673.1" cy="533.9" r="4" fill="#f00000"/>
<circle cx="677.2" cy="533.9" r="4" fill="#f00000"/>
<circle cx="679.9" cy="533.9" r="4" fill="#f00000"/>
<circle cx="534.5" cy="539.7" r="4" fill="#20ffe0"/>
<circle cx="542.6" cy="541.3" r="4" fill="#40ffc0"/>
<circle cx="528.7" cy="544.4" r="4" fill="#c8ff38"/>
<circle cx="551.2" cy="544.9" r="4" fill="#00d8ff"/>
<circle cx="531.8" cy="549.7" r="4" fill="#20f0ff"/>
<circle cx="566.1" cy="539.9" r="4" fill="#ffb000"/>
<circle cx="577.1" cy="544.2" r="4" fill="#ff6800"/>
<circle cx="582.1" cy="538.6" r="4" fill="#f01000"/>
<circle cx="586.9" cy="535.5" r="4" fill="#f0ff10"/>
<circle cx="588.2" cy="539.3" r="4" fill="#c0ff40"/>
<circle cx="589.9" cy="548.0" r="4" fill="#f0ff10"/>
<circle cx="599.3" cy="545.3" r="4" fill="#ffa000"/>
<circle cx="602.2" cy="546.0" r="4" fill="#00c0ff"/>
<circle cx="602.6" cy="544.9" r="4" fill="#ff8000"/>
<circle cx="626.1" cy="540.9" r="4" fill="#ff9000"/>
<circle cx="557.9" cy="551.8" r="4" fill="#a0ff60"/>
<circle cx="564.3" cy="551.3" r="4" fill="#40ffc0"/>
<circle cx="566.1" cy="556.5" r="4" fill="#40ffd0"/>
<circle cx="531.4" cy="557.4" r="4" fill="#0030ff"/>
<circle cx="538.1" cy="556.7" r="4" fill="#0060ff"/>
<circle cx="546.2" cy="561.0" r="4" fill="#00e0ff"/>
<circle cx="553.9" cy="558.3" r="4" fill="#0098ff"/>
<circle cx="559.0" cy="561.7" r="4" fill="#ffd800"/>
<circle cx="567.0" cy="561.0" r="4" fill="#0090ff"/>
<circle cx="559.0" cy="565.5" r="4" fill="#ff9800"/>
<circle cx="522.7" cy="563.4" r="4" fill="#0050ff"/>
<circle cx="528.1" cy="564.1" r="4" fill="#0058ff"/>
<circle cx="538.8" cy="563.4" r="4" fill="#0000d0"/>
<circle cx="546.2" cy="567.5" r="4" fill="#0078ff"/>
<circle cx="553.6" cy="568.8" r="4" fill="#ffd000"/>
<circle cx="552.2" cy="572.2" r="4" fill="#0000e0"/>
<circle cx="540.8" cy="574.9" r="4" fill="#0080ff"/>
<circle cx="534.8" cy="574.2" r="4" fill="#00b0ff"/>
<circle cx="530.7" cy="578.2" r="4" fill="#00c0ff"/>
<circle cx="560.3" cy="578.2" r="4" fill="#0090ff"/>
<circle cx="522.7" cy="579.6" r="4" fill="#0000c0"/>
<circle cx="548.9" cy="575.5" r="4" fill="#0060ff"/>
<circle cx="589.9" cy="559.7" r="4" fill="#ffb000"/>
<circle cx="584.2" cy="565.5" r="4" fill="#00b0ff"/>
<circle cx="576.2" cy="568.1" r="4" fill="#50ffc0"/>
<circle cx="575.3" cy="571.5" r="4" fill="#0030ff"/>
<circle cx="582.5" cy="572.2" r="4" fill="#40ffc0"/>
<circle cx="589.2" cy="573.5" r="4" fill="#a0ff60"/>
<circle cx="591.9" cy="578.2" r="4" fill="#20f0ff"/>
<circle cx="614.0" cy="560.1" r="4" fill="#ffa000"/>
<circle cx="658.0" cy="556.1" r="4" fill="#ff7800"/>
<circle cx="675.2" cy="553.6" r="4" fill="#ff6800"/>
<circle cx="679.9" cy="547.3" r="4" fill="#f00000"/>
<circle cx="658.0" cy="566.1" r="4" fill="#ffa000"/>
<circle cx="678.5" cy="565.5" r="4" fill="#ff3000"/>
<circle cx="673.8" cy="572.2" r="4" fill="#f00000"/>
<circle cx="642.2" cy="578.9" r="4" fill="#ff9000"/>
<circle cx="693.4" cy="462.0" r="4" fill="#980000"/>
<circle cx="697.5" cy="462.7" r="4" fill="#a00000"/>
<circle cx="706.2" cy="464.0" r="4" fill="#900000"/>
<circle cx="713.6" cy="462.0" r="4" fill="#8b0000"/>
<circle cx="688.7" cy="472.1" r="4" fill="#a80000"/>
<circle cx="727.7" cy="468.7" r="4" fill="#8b0000"/>
<circle cx="739.1" cy="468.7" r="4" fill="#8b0000"/>
<circle cx="743.1" cy="470.1" r="4" fill="#8b0000"/>
<circle cx="751.2" cy="470.7" r="4" fill="#900000"/>
<circle cx="762.9" cy="467.4" r="4" fill="#900000"/>
<circle cx="758.2" cy="476.1" r="4" fill="#900000"/>
<circle cx="739.8" cy="478.1" r="4" fill="#900000"/>
<circle cx="694.1" cy="483.8" r="4" fill="#8b0000"/>
<circle cx="702.2" cy="487.3" r="4" fill="#8b0000"/>
<circle cx="723.9" cy="484.2" r="4" fill="#8b0000"/>
<circle cx="682.7" cy="488.9" r="4" fill="#a80000"/>
<circle cx="751.2" cy="488.5" r="4" fill="#a00000"/>
<circle cx="761.1" cy="487.8" r="4" fill="#900000"/>
<circle cx="730.4" cy="492.2" r="4" fill="#8b0000"/>
<circle cx="742.5" cy="492.2" r="4" fill="#8b0000"/>
<circle cx="689.1" cy="496.9" r="4" fill="#b00000"/>
<circle cx="682.7" cy="500.3" r="4" fill="#8b0000"/>
<circle cx="701.9" cy="499.9" r="4" fill="#a00000"/>
<circle cx="725.0" cy="501.0" r="4" fill="#a80000"/>
<circle cx="749.9" cy="500.7" r="4" fill="#8b0000"/>
<circle cx="774.8" cy="504.1" r="4" fill="#980000"/>
<circle cx="784.8" cy="499.6" r="4" fill="#900000"/>
<circle cx="786.1" cy="505.0" r="4" fill="#a00000"/>
<circle cx="790.2" cy="510.4" r="4" fill="#900000"/>
<circle cx="682.7" cy="507.7" r="4" fill="#a00000"/>
<circle cx="684.0" cy="513.7" r="4" fill="#8b0000"/>
<circle cx="692.8" cy="510.8" r="4" fill="#b80000"/>
<circle cx="703.9" cy="508.4" r="4" fill="#a80000"/>
<circle cx="712.9" cy="510.0" r="4" fill="#ff1000"/>
<circle cx="729.0" cy="509.7" r="4" fill="#b80000"/>
<circle cx="719.0" cy="516.4" r="4" fill="#c00000"/>
<circle cx="720.3" cy="520.5" r="4" fill="#c00000"/>
<circle cx="726.3" cy="518.4" r="4" fill="#8b0000"/>
<circle cx="740.5" cy="518.8" r="4" fill="#b00000"/>
<circle cx="751.6" cy="520.5" r="4" fill="#8b0000"/>
<circle cx="689.1" cy="522.1" r="4" fill="#f00000"/>
<circle cx="701.9" cy="520.5" r="4" fill="#d00000"/>
<circle cx="712.9" cy="520.7" r="4" fill="#e00000"/>
<circle cx="737.1" cy="526.8" r="4" fill="#e00000"/>
<circle cx="749.6" cy="527.2" r="4" fill="#e00000"/>
<circle cx="716.5" cy="533.6" r="4" fill="#e80000"/>
<circle cx="736.4" cy="537.0" r="4" fill="#d80000"/>
<circle cx="740.5" cy="537.6" r="4" fill="#c80000"/>
<circle cx="783.2" cy="535.9" r="4" fill="#8b0000"/>
<circle cx="779.1" cy="539.0" r="4" fill="#b00000"/>
<circle cx="786.8" cy="543.6" r="4" fill="#c80000"/>
<circle cx="791.2" cy="542.2" r="4" fill="#c80000"/>
<circle cx="812.7" cy="541.3" r="4" fill="#b00000"/>
<circle cx="689.1" cy="544.6" r="4" fill="#e80000"/>
<circle cx="682.7" cy="546.6" r="4" fill="#f00000"/>
<circle cx="687.8" cy="552.4" r="4" fill="#f00000"/>
<circle cx="707.9" cy="552.4" r="4" fill="#f00000"/>
<circle cx="743.8" cy="547.6" r="4" fill="#d80000"/>
<circle cx="751.2" cy="555.6" r="4" fill="#c80000"/>
<circle cx="758.9" cy="557.8" r="4" fill="#c80000"/>
<circle cx="770.9" cy="562.8" r="4" fill="#d00000"/>
<circle cx="732.8" cy="563.2" r="4" fill="#e00000"/>
<circle cx="775.8" cy="569.9" r="4" fill="#e00000"/>
<circle cx="705.1" cy="568.8" r="4" fill="#f00000"/>
<circle cx="680.0" cy="565.5" r="4" fill="#ff6000"/>
<circle cx="698.8" cy="576.6" r="4" fill="#ff8c00"/>
<circle cx="753.9" cy="575.3" r="4" fill="#ff3000"/>
<circle cx="749.9" cy="578.2" r="4" fill="#f00000"/>
<circle cx="366.0" cy="550.7" r="4" fill="#0000e0"/>
<circle cx="375.9" cy="553.0" r="4" fill="#0000e0"/>
<circle cx="396.3" cy="546.0" r="4" fill="#00a0ff"/>
<circle cx="399.0" cy="550.1" r="4" fill="#0000e0"/>
<circle cx="360.0" cy="567.5" r="4" fill="#ff8800"/>
<circle cx="362.0" cy="563.1" r="4" fill="#0050ff"/>
<circle cx="361.3" cy="570.6" r="4" fill="#0050ff"/>
<circle cx="360.0" cy="579.6" r="4" fill="#00c0ff"/>
<circle cx="392.5" cy="589.7" r="4" fill="#0060ff"/>
<circle cx="390.2" cy="603.4" r="4" fill="#0070ff"/>
<circle cx="377.5" cy="603.1" r="4" fill="#0060ff"/>
<circle cx="426.5" cy="542.0" r="4" fill="#0020ff"/>
<circle cx="439.3" cy="541.3" r="4" fill="#00d0ff"/>
<circle cx="426.9" cy="549.7" r="4" fill="#0000c8"/>
<circle cx="437.0" cy="553.4" r="4" fill="#0000e0"/>
<circle cx="441.9" cy="556.8" r="4" fill="#00b0ff"/>
<circle cx="422.9" cy="556.8" r="4" fill="#0080ff"/>
<circle cx="426.9" cy="558.8" r="4" fill="#ff9000"/>
<circle cx="420.5" cy="561.8" r="4" fill="#00d8ff"/>
<circle cx="426.9" cy="563.5" r="4" fill="#0010e8"/>
<circle cx="431.9" cy="567.8" r="4" fill="#60ffa0"/>
<circle cx="418.0" cy="572.9" r="4" fill="#0000e8"/>
<circle cx="448.0" cy="558.8" r="4" fill="#ff5000"/>
<circle cx="444.6" cy="563.1" r="4" fill="#ff8800"/>
<circle cx="448.0" cy="562.2" r="4" fill="#00a0ff"/>
<circle cx="451.3" cy="541.3" r="4" fill="#f0e820"/>
<circle cx="458.1" cy="543.4" r="4" fill="#d8f030"/>
<circle cx="464.8" cy="540.0" r="4" fill="#80ff80"/>
<circle cx="470.2" cy="540.7" r="4" fill="#60ffa0"/>
<circle cx="476.2" cy="544.7" r="4" fill="#20f0ff"/>
<circle cx="456.7" cy="548.7" r="4" fill="#20f0ff"/>
<circle cx="454.0" cy="551.4" r="4" fill="#00e0ff"/>
<circle cx="465.5" cy="550.1" r="4" fill="#e0ff20"/>
<circle cx="472.8" cy="549.4" r="4" fill="#ffd800"/>
<circle cx="455.4" cy="555.9" r="4" fill="#0050ff"/>
<circle cx="464.8" cy="557.7" r="4" fill="#0000e8"/>
<circle cx="459.1" cy="562.2" r="4" fill="#0080ff"/>
<circle cx="456.1" cy="567.5" r="4" fill="#ffc000"/>
<circle cx="457.0" cy="572.2" r="4" fill="#0090ff"/>
<circle cx="456.5" cy="575.2" r="4" fill="#0020e0"/>
<circle cx="484.3" cy="544.7" r="4" fill="#ffb000"/>
<circle cx="486.3" cy="550.1" r="4" fill="#ffe800"/>
<circle cx="491.0" cy="540.7" r="4" fill="#d8f030"/>
<circle cx="505.8" cy="542.7" r="4" fill="#ff8800"/>
<circle cx="509.8" cy="540.7" r="4" fill="#ffd000"/>
<circle cx="503.1" cy="552.1" r="4" fill="#e0f020"/>
<circle cx="488.3" cy="555.4" r="4" fill="#0040ff"/>
<circle cx="495.0" cy="554.1" r="4" fill="#0050ff"/>
<circle cx="506.4" cy="559.5" r="4" fill="#ffc000"/>
<circle cx="490.0" cy="561.8" r="4" fill="#00b0ff"/>
<circle cx="497.0" cy="560.2" r="4" fill="#0080ff"/>
<circle cx="500.4" cy="564.9" r="4" fill="#0090ff"/>
<circle cx="513.1" cy="563.1" r="4" fill="#0020ff"/>
<circle cx="519.9" cy="563.5" r="4" fill="#0090ff"/>
<circle cx="476.9" cy="564.9" r="4" fill="#ffc800"/>
<circle cx="480.5" cy="568.9" r="4" fill="#40ffc0"/>
<circle cx="496.4" cy="570.9" r="4" fill="#00b8ff"/>
<circle cx="502.4" cy="573.6" r="4" fill="#00c0ff"/>
<circle cx="507.8" cy="571.2" r="4" fill="#0010e0"/>
<circle cx="514.5" cy="573.6" r="4" fill="#ff8800"/>
<circle cx="486.9" cy="572.2" r="4" fill="#0000d0"/>
<circle cx="488.7" cy="573.6" r="4" fill="#0050ff"/>
<circle cx="491.4" cy="577.6" r="4" fill="#ff5000"/>
<circle cx="497.0" cy="577.6" r="4" fill="#0030ff"/>
<circle cx="493.4" cy="582.3" r="4" fill="#00a0ff"/>
<circle cx="478.9" cy="577.9" r="4" fill="#0000d8"/>
<circle cx="464.8" cy="580.3" r="4" fill="#30ffd0"/>
<circle cx="462.8" cy="586.3" r="4" fill="#0090ff"/>
<circle cx="476.9" cy="581.6" r="4" fill="#a0ff60"/>
<circle cx="476.6" cy="584.3" r="4" fill="#ff8800"/>
<circle cx="477.1" cy="590.8" r="4" fill="#0070ff"/>
<circle cx="491.9" cy="588.6" r="4" fill="#0000d8"/>
<circle cx="451.8" cy="588.4" r="4" fill="#ff9800"/>
<circle cx="475.5" cy="598.8" r="4" fill="#ff9800"/>
<circle cx="499.0" cy="593.7" r="4" fill="#0020e0"/>
<circle cx="504.0" cy="590.8" r="4" fill="#ff8000"/>
<circle cx="511.1" cy="587.7" r="4" fill="#0050ff"/>
<circle cx="516.5" cy="587.0" r="4" fill="#0010e8"/>
<circle cx="511.8" cy="593.7" r="4" fill="#ff8800"/>
<circle cx="504.4" cy="596.4" r="4" fill="#ff8000"/>
<circle cx="507.8" cy="599.1" r="4" fill="#0010e8"/>
<circle cx="500.4" cy="602.5" r="4" fill="#ff8000"/>
<circle cx="499.7" cy="605.8" r="4" fill="#ff8800"/>
<circle cx="503.1" cy="607.2" r="4" fill="#0000e0"/>
<circle cx="519.2" cy="596.4" r="4" fill="#ff8000"/>
<circle cx="519.2" cy="605.8" r="4" fill="#ff8800"/>
<circle cx="501.7" cy="614.6" r="4" fill="#0060ff"/>
<circle cx="448.7" cy="600.5" r="4" fill="#0000e8"/>
<circle cx="454.7" cy="598.7" r="4" fill="#ff9800"/>
<circle cx="455.4" cy="601.8" r="4" fill="#60ffa0"/>
<circle cx="463.4" cy="603.8" r="4" fill="#90ff70"/>
<circle cx="460.1" cy="609.2" r="4" fill="#0000d8"/>
<circle cx="437.9" cy="604.8" r="4" fill="#0000d0"/>
<circle cx="484.7" cy="608.8" r="4" fill="#0000d0"/>
<circle cx="418.4" cy="609.6" r="4" fill="#0050ff"/>
<circle cx="425.2" cy="609.2" r="4" fill="#ff9800"/>
<circle cx="422.9" cy="615.2" r="4" fill="#ff7800"/>
<circle cx="437.9" cy="613.6" r="4" fill="#ff9800"/>
<circle cx="441.9" cy="612.5" r="4" fill="#0080ff"/>
<circle cx="452.7" cy="630.0" r="4" fill="#0020e8"/>
<circle cx="482.9" cy="632.0" r="4" fill="#0050ff"/>
<circle cx="510.5" cy="628.9" r="4" fill="#0000e0"/>
<circle cx="514.5" cy="625.3" r="4" fill="#50ffb0"/>
<circle cx="467.5" cy="636.1" r="4" fill="#ff9800"/>
<circle cx="473.5" cy="636.5" r="4" fill="#0040ff"/>
<circle cx="482.0" cy="637.8" r="4" fill="#0050ff"/>
<circle cx="497.0" cy="640.1" r="4" fill="#ff9000"/>
<circle cx="517.2" cy="637.4" r="4" fill="#0070ff"/>
<circle cx="416.2" cy="638.7" r="4" fill="#0050ff"/>
<circle cx="457.0" cy="648.1" r="4" fill="#ff9800"/>
<circle cx="461.0" cy="653.9" r="4" fill="#0000e8"/>
<circle cx="501.1" cy="648.8" r="4" fill="#ff9800"/>
<circle cx="279.0" cy="423.6" r="4" fill="#0020f0"/>
<circle cx="262.1" cy="437.1" r="4" fill="#40ffc0"/>
<circle cx="277.0" cy="452.9" r="4" fill="#ff3000"/>
<circle cx="345.4" cy="424.7" r="4" fill="#f0f810"/>
<circle cx="343.1" cy="432.8" r="4" fill="#90ff70"/>
<circle cx="338.8" cy="439.1" r="4" fill="#f0f810"/>
<circle cx="340.1" cy="447.9" r="4" fill="#0080ff"/>
<circle cx="351.8" cy="456.5" r="4" fill="#e8f818"/>
<circle cx="318.2" cy="465.7" r="4" fill="#20ffe0"/>
<circle cx="296.1" cy="472.7" r="4" fill="#00c0ff"/>
<circle cx="250.1" cy="485.8" r="4" fill="#00b8ff"/>
<circle cx="356.9" cy="480.7" r="4" fill="#ffc800"/>
<circle cx="329.9" cy="488.1" r="4" fill="#0020f0"/>
<circle cx="257.9" cy="500.9" r="4" fill="#20ffe0"/>
<circle cx="342.7" cy="501.9" r="4" fill="#0040ff"/>
<circle cx="344.4" cy="503.3" r="4" fill="#30ffd0"/>
<circle cx="295.0" cy="510.0" r="4" fill="#70ff90"/>
<circle cx="320.0" cy="517.1" r="4" fill="#0060ff"/>
<circle cx="338.4" cy="523.0" r="4" fill="#0070ff"/>
<circle cx="346.2" cy="528.5" r="4" fill="#0090ff"/>
<circle cx="308.8" cy="527.7" r="4" fill="#00c8ff"/>
<circle cx="295.1" cy="533.9" r="4" fill="#0080ff"/>
<circle cx="306.9" cy="538.2" r="4" fill="#0000e0"/>
<circle cx="298.5" cy="550.7" r="4" fill="#0090ff"/>
<circle cx="312.2" cy="553.7" r="4" fill="#00c0ff"/>
<circle cx="351.1" cy="557.7" r="4" fill="#0040ff"/>
<circle cx="312.2" cy="569.2" r="4" fill="#0000e0"/>
<circle cx="326.7" cy="569.3" r="4" fill="#0000e8"/>
<circle cx="341.7" cy="577.6" r="4" fill="#0030f0"/>
<circle cx="359.2" cy="562.8" r="4" fill="#0080ff"/>
<circle cx="69.1" cy="488.9" r="4" fill="#a0ff30"/>
<circle cx="71.1" cy="530.8" r="4" fill="#00c8ff"/>
<circle cx="97.9" cy="524.8" r="4" fill="#fff000"/>
<circle cx="407.8" cy="684.9" r="4" fill="#0010f0"/>
<circle cx="430.7" cy="688.3" r="4" fill="#0000c0"/>
<circle cx="522.7" cy="585.4" r="4" fill="#0000d0"/>
<circle cx="532.8" cy="581.3" r="4" fill="#00b0ff"/>
<circle cx="551.6" cy="582.0" r="4" fill="#00e0ff"/>
<circle cx="560.3" cy="581.3" r="4" fill="#0090ff"/>
<circle cx="543.5" cy="588.1" r="4" fill="#0070ff"/>
<circle cx="532.8" cy="590.1" r="4" fill="#0010e0"/>
<circle cx="525.4" cy="592.1" r="4" fill="#0070ff"/>
<circle cx="530.1" cy="594.1" r="4" fill="#0000d8"/>
<circle cx="537.5" cy="595.4" r="4" fill="#0000d8"/>
<circle cx="522.7" cy="597.5" r="4" fill="#ff8800"/>
<circle cx="527.4" cy="599.5" r="4" fill="#0080ff"/>
<circle cx="522.0" cy="600.8" r="4" fill="#00c0ff"/>
<circle cx="560.3" cy="586.7" r="4" fill="#0098ff"/>
<circle cx="570.4" cy="584.7" r="4" fill="#00a0ff"/>
<circle cx="573.1" cy="588.3" r="4" fill="#0080ff"/>
<circle cx="563.7" cy="592.1" r="4" fill="#20f0ff"/>
<circle cx="557.6" cy="593.4" r="4" fill="#0010e0"/>
<circle cx="565.7" cy="596.8" r="4" fill="#0090ff"/>
<circle cx="556.3" cy="598.1" r="4" fill="#ff8000"/>
<circle cx="553.9" cy="600.4" r="4" fill="#0088ff"/>
<circle cx="566.6" cy="600.4" r="4" fill="#ff8800"/>
<circle cx="538.8" cy="601.2" r="4" fill="#fff000"/>
<circle cx="537.2" cy="606.2" r="4" fill="#c0ff40"/>
<circle cx="522.0" cy="607.8" r="4" fill="#ff9000"/>
<circle cx="535.9" cy="611.6" r="4" fill="#ff9800"/>
<circle cx="546.6" cy="607.9" r="4" fill="#0000e0"/>
<circle cx="556.9" cy="606.2" r="4" fill="#0010e0"/>
<circle cx="556.9" cy="609.8" r="4" fill="#00a8ff"/>
<circle cx="551.2" cy="612.9" r="4" fill="#00d0ff"/>
<circle cx="556.9" cy="614.7" r="4" fill="#00c8ff"/>
<circle cx="572.7" cy="609.8" r="4" fill="#0000e0"/>
<circle cx="579.4" cy="609.8" r="4" fill="#ff8800"/>
<circle cx="582.5" cy="602.2" r="4" fill="#ff8800"/>
<circle cx="584.9" cy="598.4" r="4" fill="#00e0ff"/>
<circle cx="589.2" cy="604.2" r="4" fill="#00c0ff"/>
<circle cx="606.0" cy="584.7" r="4" fill="#0010e0"/>
<circle cx="619.1" cy="586.0" r="4" fill="#ffb800"/>
<circle cx="612.7" cy="590.1" r="4" fill="#0080ff"/>
<circle cx="602.2" cy="590.5" r="4" fill="#20f0ff"/>
<circle cx="603.0" cy="595.0" r="4" fill="#00b8ff"/>
<circle cx="607.7" cy="613.9" r="4" fill="#0020f0"/>
<circle cx="616.2" cy="616.0" r="4" fill="#0060ff"/>
<circle cx="644.9" cy="592.1" r="4" fill="#0030ff"/>
<circle cx="643.9" cy="603.9" r="4" fill="#0060ff"/>
<circle cx="673.1" cy="606.9" r="4" fill="#0030f8"/>
<circle cx="653.0" cy="609.8" r="4" fill="#0098ff"/>
<circle cx="657.0" cy="615.6" r="4" fill="#0080ff"/>
<circle cx="651.9" cy="616.9" r="4" fill="#0098ff"/>
<circle cx="646.0" cy="621.0" r="4" fill="#ff7800"/>
<circle cx="635.1" cy="633.1" r="4" fill="#0080ff"/>
<circle cx="646.0" cy="635.7" r="4" fill="#0050ff"/>
<circle cx="653.0" cy="644.1" r="4" fill="#0000f0"/>
<circle cx="541.5" cy="621.0" r="4" fill="#0000d8"/>
<circle cx="538.8" cy="625.7" r="4" fill="#ff8800"/>
<circle cx="538.8" cy="633.1" r="4" fill="#ff8000"/>
<circle cx="556.9" cy="628.4" r="4" fill="#ff7000"/>
<circle cx="557.3" cy="632.4" r="4" fill="#ff7800"/>
<circle cx="575.3" cy="632.0" r="4" fill="#00b8ff"/>
<circle cx="580.5" cy="630.8" r="4" fill="#ff6000"/>
<circle cx="599.9" cy="630.0" r="4" fill="#50ffb0"/>
<circle cx="601.7" cy="633.7" r="4" fill="#ff8000"/>
<circle cx="564.1" cy="642.7" r="4" fill="#ff7800"/>
<circle cx="561.6" cy="653.6" r="4" fill="#ff9000"/>
<circle cx="543.9" cy="668.9" r="4" fill="#ff8000"/>
<circle cx="644.3" cy="671.1" r="4" fill="#0000d0"/>
<circle cx="520.0" cy="637.1" r="4" fill="#0080ff"/>
<circle cx="748.9" cy="594.1" r="4" fill="#f01000"/>
<circle cx="740.7" cy="597.7" r="4" fill="#ff1800"/>
<circle cx="735.3" cy="598.1" r="4" fill="#60ffa0"/>
<circle cx="714.9" cy="595.9" r="4" fill="#b80000"/>
<circle cx="694.8" cy="603.9" r="4" fill="#20f0e0"/>
<circle cx="691.0" cy="622.0" r="4" fill="#f0f810"/>
<circle cx="835.8" cy="627.7" r="4" fill="#ff9800"/>
<circle cx="795.9" cy="636.7" r="4" fill="#90ff50"/>
<circle cx="833.8" cy="662.6" r="4" fill="#ff3000"/>
<circle cx="950.4" cy="683.4" r="4" fill="#0070ff"/>
<circle cx="862.8" cy="716.1" r="4" fill="#d0ff30"/>
<circle cx="905.1" cy="714.9" r="4" fill="#ff7800"/>
<circle cx="869.5" cy="745.5" r="4" fill="#90ff40"/>
<circle cx="964.6" cy="774.6" r="4" fill="#ffe800"/>
<circle cx="685.0" cy="734.4" r="4" fill="#0010f0"/>
<circle cx="712.7" cy="731.1" r="4" fill="#f00000"/>
</g>
<path d="M324 132 L292.2 208 L238.3 344.8 L207.1 420 L150.9 545.7" stroke="#000" stroke-width="0.95" fill="none"/>
<path d="M472.4 235.3 L429.1 336.7 L390.2 420 L360 484 L333 540 L306.8 590.4" stroke="#000" stroke-width="0.95" fill="none"/>
<path d="M652.3 341.5 L593.2 460 L526.7 580 L495 636.7" stroke="#000" stroke-width="0.95" fill="none"/>
<path d="M873.8 458.2 L840 514.4 L800.5 580 L766.6 634.4 L729.7 690.8" stroke="#000" stroke-width="0.95" fill="none"/>
<path d="M324 132 L353 151.3 L381.8 172.8 L412 192 L442.2 212.5 L472.4 235.3 L507 257 L541.5 277.3 L577.1 297.8 L614 320 L652.3 341.5 L692.8 363.5 L735.1 387.3 L778.7 409.9 L825.1 434.7 L873.8 458.2" stroke="#000" stroke-width="3" fill="none" stroke-linecap="butt"/>
<path d="M150.9 545.7 L179.9 554.6 L209.6 563.5 L240.7 572.5 L273.2 581 L306.8 590.4 L341.1 599.1 L376.8 607.8 L414.4 617.2 L452.7 626.6 L495 636.7 L536.8 646.5 L581.1 657.2 L629.1 668 L677.2 679.4 L729.7 690.8" stroke="#000" stroke-width="3" fill="none" stroke-linecap="butt"/>
<g transform="translate(324 132) rotate(-56.4)"><path d="M-5.5 0H5.5" stroke="#000" stroke-width="1.1"/><text x="7" y="4.2" font-size="12" letter-spacing="0.4" fill="#111">0.3</text></g>
<g transform="translate(353 151.3) rotate(-54.8)"><path d="M-5.5 0H5.5" stroke="#000" stroke-width="1.1"/><text x="7" y="4.2" font-size="12" letter-spacing="0.4" fill="#111">0.29</text></g>
<g transform="translate(381.8 172.8) rotate(-55.4)"><path d="M-5.5 0H5.5" stroke="#000" stroke-width="1.1"/><text x="7" y="4.2" font-size="12" letter-spacing="0.4" fill="#111">0.28</text></g>
<g transform="translate(412 192) rotate(-56.7)"><path d="M-5.5 0H5.5" stroke="#000" stroke-width="1.1"/><text x="7" y="4.2" font-size="12" letter-spacing="0.4" fill="#111">0.27</text></g>
<g transform="translate(442.2 212.5) rotate(-54.4)"><path d="M-5.5 0H5.5" stroke="#000" stroke-width="1.1"/><text x="7" y="4.2" font-size="12" letter-spacing="0.4" fill="#111">0.26</text></g>
<g transform="translate(472.4 235.3) rotate(-55.5)"><path d="M-5.5 0H5.5" stroke="#000" stroke-width="1.1"/><text x="7" y="4.2" font-size="12" letter-spacing="0.4" fill="#111">0.25</text></g>
<g transform="translate(507 257) rotate(-58.7)"><path d="M-5.5 0H5.5" stroke="#000" stroke-width="1.1"/><text x="7" y="4.2" font-size="12" letter-spacing="0.4" fill="#111">0.24</text></g>
<g transform="translate(541.5 277.3) rotate(-59.8)"><path d="M-5.5 0H5.5" stroke="#000" stroke-width="1.1"/><text x="7" y="4.2" font-size="12" letter-spacing="0.4" fill="#111">0.23</text></g>
<g transform="translate(577.1 297.8) rotate(-59.5)"><path d="M-5.5 0H5.5" stroke="#000" stroke-width="1.1"/><text x="7" y="4.2" font-size="12" letter-spacing="0.4" fill="#111">0.22</text></g>
<g transform="translate(614 320) rotate(-59.8)"><path d="M-5.5 0H5.5" stroke="#000" stroke-width="1.1"/><text x="7" y="4.2" font-size="12" letter-spacing="0.4" fill="#111">0.21</text></g>
<g transform="translate(652.3 341.5) rotate(-61.1)"><path d="M-5.5 0H5.5" stroke="#000" stroke-width="1.1"/><text x="7" y="4.2" font-size="12" letter-spacing="0.4" fill="#111">0.2</text></g>
<g transform="translate(692.8 363.5) rotate(-61.1)"><path d="M-5.5 0H5.5" stroke="#000" stroke-width="1.1"/><text x="7" y="4.2" font-size="12" letter-spacing="0.4" fill="#111">0.19</text></g>
<g transform="translate(735.1 387.3) rotate(-61.6)"><path d="M-5.5 0H5.5" stroke="#000" stroke-width="1.1"/><text x="7" y="4.2" font-size="12" letter-spacing="0.4" fill="#111">0.18</text></g>
<g transform="translate(778.7 409.9) rotate(-62.2)"><path d="M-5.5 0H5.5" stroke="#000" stroke-width="1.1"/><text x="7" y="4.2" font-size="12" letter-spacing="0.4" fill="#111">0.17</text></g>
<g transform="translate(825.1 434.7) rotate(-63.1)"><path d="M-5.5 0H5.5" stroke="#000" stroke-width="1.1"/><text x="7" y="4.2" font-size="12" letter-spacing="0.4" fill="#111">0.16</text></g>
<g transform="translate(873.8 458.2) rotate(-64.2)"><path d="M-5.5 0H5.5" stroke="#000" stroke-width="1.1"/><text x="7" y="4.2" font-size="12" letter-spacing="0.4" fill="#111">0.15</text></g>
<g transform="translate(150.9 545.7) rotate(-72.9)"><path d="M-5.5 0H5.5" stroke="#000" stroke-width="1.1"/><text x="7" y="4.2" font-size="12" letter-spacing="0.4" fill="#111">0.3</text></g>
<g transform="translate(179.9 554.6) rotate(-73.1)"><path d="M-5.5 0H5.5" stroke="#000" stroke-width="1.1"/><text x="7" y="4.2" font-size="12" letter-spacing="0.4" fill="#111">0.29</text></g>
<g transform="translate(209.6 563.5) rotate(-73.6)"><path d="M-5.5 0H5.5" stroke="#000" stroke-width="1.1"/><text x="7" y="4.2" font-size="12" letter-spacing="0.4" fill="#111">0.28</text></g>
<g transform="translate(240.7 572.5) rotate(-74.6)"><path d="M-5.5 0H5.5" stroke="#000" stroke-width="1.1"/><text x="7" y="4.2" font-size="12" letter-spacing="0.4" fill="#111">0.27</text></g>
<g transform="translate(273.2 581) rotate(-74.8)"><path d="M-5.5 0H5.5" stroke="#000" stroke-width="1.1"/><text x="7" y="4.2" font-size="12" letter-spacing="0.4" fill="#111">0.26</text></g>
<g transform="translate(306.8 590.4) rotate(-75.1)"><path d="M-5.5 0H5.5" stroke="#000" stroke-width="1.1"/><text x="7" y="4.2" font-size="12" letter-spacing="0.4" fill="#111">0.25</text></g>
<g transform="translate(341.1 599.1) rotate(-76.0)"><path d="M-5.5 0H5.5" stroke="#000" stroke-width="1.1"/><text x="7" y="4.2" font-size="12" letter-spacing="0.4" fill="#111">0.24</text></g>
<g transform="translate(376.8 607.8) rotate(-76.1)"><path d="M-5.5 0H5.5" stroke="#000" stroke-width="1.1"/><text x="7" y="4.2" font-size="12" letter-spacing="0.4" fill="#111">0.23</text></g>
<g transform="translate(414.4 617.2) rotate(-76.1)"><path d="M-5.5 0H5.5" stroke="#000" stroke-width="1.1"/><text x="7" y="4.2" font-size="12" letter-spacing="0.4" fill="#111">0.22</text></g>
<g transform="translate(452.7 626.6) rotate(-76.4)"><path d="M-5.5 0H5.5" stroke="#000" stroke-width="1.1"/><text x="7" y="4.2" font-size="12" letter-spacing="0.4" fill="#111">0.21</text></g>
<g transform="translate(495 636.7) rotate(-76.7)"><path d="M-5.5 0H5.5" stroke="#000" stroke-width="1.1"/><text x="7" y="4.2" font-size="12" letter-spacing="0.4" fill="#111">0.2</text></g>
<g transform="translate(536.8 646.5) rotate(-76.6)"><path d="M-5.5 0H5.5" stroke="#000" stroke-width="1.1"/><text x="7" y="4.2" font-size="12" letter-spacing="0.4" fill="#111">0.19</text></g>
<g transform="translate(581.1 657.2) rotate(-76.9)"><path d="M-5.5 0H5.5" stroke="#000" stroke-width="1.1"/><text x="7" y="4.2" font-size="12" letter-spacing="0.4" fill="#111">0.18</text></g>
<g transform="translate(629.1 668) rotate(-77.0)"><path d="M-5.5 0H5.5" stroke="#000" stroke-width="1.1"/><text x="7" y="4.2" font-size="12" letter-spacing="0.4" fill="#111">0.17</text></g>
<g transform="translate(677.2 679.4) rotate(-77.2)"><path d="M-5.5 0H5.5" stroke="#000" stroke-width="1.1"/><text x="7" y="4.2" font-size="12" letter-spacing="0.4" fill="#111">0.16</text></g>
<g transform="translate(729.7 690.8) rotate(-77.7)"><path d="M-5.5 0H5.5" stroke="#000" stroke-width="1.1"/><text x="7" y="4.2" font-size="12" letter-spacing="0.4" fill="#111">0.15</text></g>
<g font-size="12" fill="#111">
<text x="324.5" y="131" text-anchor="end">1.0</text>
<text x="324.5" y="131">0.3</text>
<text x="473" y="234.5">0.25</text>
<text x="653" y="341">0.2</text>
<text x="875" y="457.7">0.15</text>
<text x="151" y="545.7" text-anchor="end">0.2</text>
<text x="144" y="322.6">Saturation</text>
<text x="612.5" y="271">Por</text>
</g>
<rect x="66.5" y="57.5" width="903.0" height="769.0" fill="none" stroke="#000" stroke-width="1"/>
<path d="M66.5 826.5v5.5M66.5 57.5v-5.5M179.5 826.5v5.5M179.5 57.5v-5.5M292.5 826.5v5.5M292.5 57.5v-5.5M405.5 826.5v5.5M405.5 57.5v-5.5M518.5 826.5v5.5M518.5 57.5v-5.5M630.5 826.5v5.5M630.5 57.5v-5.5M743.5 826.5v5.5M743.5 57.5v-5.5M856.5 826.5v5.5M856.5 57.5v-5.5M969.5 826.5v5.5M969.5 57.5v-5.5M66.5 826.5h-5.5M66.5 730.5h-5.5M66.5 634.5h-5.5M66.5 538.5h-5.5M66.5 441.5h-5.5M66.5 345.5h-5.5M66.5 249.5h-5.5M66.5 153.5h-5.5" stroke="#000" stroke-width="1" fill="none"/>
<g font-size="12" fill="#111">
<text x="58.5" y="829.8" text-anchor="end">1.6</text>
<text x="58.5" y="733.8" text-anchor="end">1.65</text>
<text x="58.5" y="637.8" text-anchor="end">1.7</text>
<text x="58.5" y="541.8" text-anchor="end">1.75</text>
<text x="58.5" y="444.8" text-anchor="end">1.8</text>
<text x="58.5" y="348.8" text-anchor="end">1.85</text>
<text x="58.5" y="252.8" text-anchor="end">1.9</text>
<text x="58.5" y="156.8" text-anchor="end">1.95</text>
<text transform="translate(70.8 833.5) rotate(-90)" text-anchor="end">5000</text>
<text transform="translate(183.8 833.5) rotate(-90)" text-anchor="end">5500</text>
<text transform="translate(296.8 833.5) rotate(-90)" text-anchor="end">6000</text>
<text transform="translate(409.8 833.5) rotate(-90)" text-anchor="end">6500</text>
<text transform="translate(522.8 833.5) rotate(-90)" text-anchor="end">7000</text>
<text transform="translate(634.8 833.5) rotate(-90)" text-anchor="end">7500</text>
<text transform="translate(747.8 833.5) rotate(-90)" text-anchor="end">8000</text>
<text transform="translate(860.8 833.5) rotate(-90)" text-anchor="end">8500</text>
<text transform="translate(973.8 833.5) rotate(-90)" text-anchor="end">9000</text>
</g>
<g font-size="11.5" font-weight="bold" fill="#111">
<text transform="translate(16.3 437) rotate(-90)" text-anchor="middle" xml:space="preserve">Velocity_Ratio  (unitless)</text>
<text x="531" y="887.7" text-anchor="middle" xml:space="preserve">AI  (g/cm3_m/s)</text>
<text transform="translate(1186.2 324.8) rotate(-90)" text-anchor="middle" xml:space="preserve" font-size="11.9">Sat  (fract)</text>
</g>
<defs><linearGradient id="jet" x1="0" y1="0" x2="0" y2="1"><stop offset="0" stop-color="#800000"/><stop offset="0.125" stop-color="#ff0000"/><stop offset="0.375" stop-color="#ffff00"/><stop offset="0.5" stop-color="#80ff80"/><stop offset="0.625" stop-color="#00ffff"/><stop offset="0.875" stop-color="#0000ff"/><stop offset="1" stop-color="#000080"/></linearGradient><linearGradient id="jeth" x1="0" y1="0" x2="1" y2="0"><stop offset="0" stop-color="#800000"/><stop offset="0.125" stop-color="#ff0000"/><stop offset="0.375" stop-color="#ffff00"/><stop offset="0.5" stop-color="#80ff80"/><stop offset="0.625" stop-color="#00ffff"/><stop offset="0.875" stop-color="#0000ff"/><stop offset="1" stop-color="#000080"/></linearGradient></defs>
<rect x="999.5" y="101.5" width="60" height="452" fill="url(#jet)" stroke="#000" stroke-width="1"/>
<g font-size="11.5" font-weight="bold" fill="#111">
<text x="1075.3" y="519.1">0.1</text>
<text x="1075.3" y="473.1">0.2</text>
<text x="1075.3" y="427.1">0.3</text>
<text x="1075.3" y="381.1">0.4</text>
<text x="1075.3" y="335.1">0.5</text>
<text x="1075.3" y="289.1">0.6</text>
<text x="1075.3" y="243.1">0.7</text>
<text x="1075.3" y="197.1">0.8</text>
<text x="1075.3" y="151.1">0.9</text>
</g>
<path d="M1066.5 101V553.5M1066.5 515.5h4.5M1066.5 469.5h4.5M1066.5 423.5h4.5M1066.5 377.5h4.5M1066.5 331.5h4.5M1066.5 285.5h4.5M1066.5 239.5h4.5M1066.5 193.5h4.5M1066.5 147.5h4.5" stroke="#000" stroke-width="1" fill="none"/>
<defs><linearGradient id="grn" x1="0" y1="0" x2="0" y2="1"><stop offset="0" stop-color="#3f933f"/><stop offset="0.5" stop-color="#a6d4a2"/><stop offset="1" stop-color="#3f933f"/></linearGradient><linearGradient id="grnh" x1="0" y1="0" x2="1" y2="0"><stop offset="0" stop-color="#3f933f"/><stop offset="0.5" stop-color="#a6d4a2"/><stop offset="1" stop-color="#3f933f"/></linearGradient><linearGradient id="thumb" x1="0" y1="0" x2="1" y2="0"><stop offset="0" stop-color="#f4f4b8"/><stop offset="0.25" stop-color="#ffffe6"/><stop offset="0.6" stop-color="#f4f49a"/><stop offset="1" stop-color="#e2e244"/></linearGradient></defs>
<rect x="994.5" y="47.5" width="21" height="20" fill="#fdfbcf" stroke="#cfd5a6"/>
<rect x="1017.5" y="47.5" width="44" height="20" fill="#fdfbcf" stroke="#b9c08f"/>
<rect x="1062.5" y="47.5" width="19" height="20" fill="#fdfbcf" stroke="#cfd5a6"/>
<rect x="1083.5" y="47.5" width="20" height="20" fill="#fdfbcf" stroke="#cfd5a6"/>
<rect x="994.5" y="69.5" width="21" height="21" fill="#fdfbcf" stroke="#cfd5a6"/>
<rect x="1017.5" y="69.5" width="20" height="21" fill="#c6cd9b" stroke="#b4bc8a"/>
<rect x="1039.5" y="69.5" width="20" height="21" fill="#fdfbcf" stroke="#cfd5a6"/>
<rect x="1061.5" y="69.5" width="20" height="21" fill="#fdfbcf" stroke="#cfd5a6"/>
<path d="M997.8 56.8l5-4v2.3h9.2v3.4h-9.2v2.3z" fill="url(#grn)" stroke="#3f933f" stroke-width="0.6"/>
<path d="M1100.2 56.8l-5-4v2.3h-9.2v3.4h9.2v2.3z" fill="url(#grn)" stroke="#3f933f" stroke-width="0.6"/>
<path d="M1005.1 73l4 5h-2.4v4.2h2.4l-4 5l-4-5h2.4v-4.2h-2.4z" fill="url(#grnh)" stroke="#3f933f" stroke-width="0.6"/>
<rect x="1019" y="51" width="42" height="12" fill="url(#jeth)" stroke="#a8a8a8" stroke-width="0.8"/>
<path d="M1067 55.2h10.2l-5.1 5z" fill="#333"/>
<rect x="1019" y="72" width="16" height="16" fill="#fff"/>
<rect x="1019" y="72" width="7" height="16" fill="url(#jet)"/>
<text x="1027.3" y="83.8" font-size="13" font-weight="bold" fill="#3a8a3a">a</text>
<rect x="1041" y="72" width="16" height="16" fill="#fff"/>
<rect x="1041" y="72" width="7" height="16" fill="url(#jet)"/>
<text x="1049" y="83.8" font-size="13" font-weight="bold" fill="#111">s</text>
<rect x="1063" y="72" width="16" height="16" fill="#fff"/>
<rect x="1063" y="72" width="7" height="16" fill="url(#jet)"/>
<text x="1065" y="83.8" font-size="15" font-weight="bold" fill="#2d6e2d">m</text>
<rect x="1178.5" y="559" width="14" height="280" fill="#dfe3c4"/>
<path d="M1178.5 559V839" stroke="#b7bf8c" stroke-width="1"/>
<rect x="1179" y="559.5" width="13" height="14" fill="#f3f5e0" stroke="#fbfcf2" stroke-width="1"/>
<path d="M1181 568h9l-4.5 -4.4z" fill="#222"/>
<rect x="1179" y="574.5" width="13" height="147.5" fill="url(#thumb)" stroke="#d4d98c" stroke-width="0.8"/>
<path d="M1181 646.5h9.5M1181 649h9.5M1181 651.5h9.5" stroke="#9a9a78" stroke-width="1"/>
<rect x="1179" y="824.5" width="13" height="14" fill="#f3f5e0" stroke="#fbfcf2" stroke-width="1"/>
<path d="M1181 830h8.4l-4.2 4.4z" fill="#222"/>
<clipPath id="lc"><rect x="1080" y="23" width="112" height="22"/></clipPath>
<g clip-path="url(#lc)" font-family="DejaVu Sans Light, DejaVu Sans, sans-serif" font-weight="200" font-size="27" fill="#e0421a" stroke="#e0421a" stroke-width="0.45">
<text transform="translate(1088.3 44.6) scale(0.82 1)">R</text>
<text transform="translate(1101.4 44.6) scale(1.25 1)">o</text>
<text transform="translate(1121.2 44.6) scale(1.0 1)">k</text>
<text transform="translate(1135.6 44.6) scale(1.04 1)">D</text>
<text transform="translate(1154.6 44.6) scale(1.35 1)">o</text>
<text transform="translate(1176.1 44.6) scale(1.15 1)">c</text>
</g>
</svg>
<!--TOOLBAR-->
<div id="legend"><div id="sym">Symbols:</div><div class="lr" style="top:24.2px;color:#111"><i style="background:#000"></i>21/10-1</div><div class="lr" style="top:39.2px;color:#111"><i style="background:#000"></i>21/10-2</div><div class="lr" style="top:54.2px;color:#111"><i style="background:#000"></i>21/10-3A</div><div class="lr" style="top:69.2px;color:#111"><i style="background:#000"></i>21/10-4</div><div class="lr" style="top:84.2px;color:#111"><i style="background:#000"></i>21/10-5</div><div class="lr" style="top:99.2px;color:#8a8a28"><i style="background:#6b6b00"></i>21/10-6</div><div class="lr" style="top:114.2px;color:#111"><i style="background:#000"></i>21/10-8</div><div class="lr" style="top:129.2px;color:#a8a828"><i style="background:#a0a000"></i>21/10-9</div><div class="lr" style="top:144.2px;color:#4da6ff"><i style="background:#3399ff"></i>21/9-1</div><div class="lr" style="top:159.2px;color:#111"><i style="background:#000"></i>21/9-5A</div><div class="lr" style="top:174.2px;color:#111"><i style="background:#000"></i>21/9-6A</div><div class="lr" style="top:189.2px;color:#111"><i style="background:#000"></i>22/6-1</div><div class="lr" style="top:204.2px;color:#111"><i style="background:#000"></i>22/6A-10</div><div class="lr" style="top:219.2px;color:#111"><i style="background:#000"></i>22/6A-2</div><div class="lr" style="top:234.2px;color:#111"><i style="background:#000"></i>22/6A-4</div><div class="lr" style="top:249.2px;color:#111"><i style="background:#000"></i>22/6A-5</div><div class="lr" style="top:264.2px;color:#111"><i style="background:#000"></i>22/6A-6</div></div>
<div id="cut"><div style="position:absolute;left:1px;top:2px">Global Cut-offs:</div><div style="position:absolute;left:7px;top:17px">Volume &lt; 0.1</div></div>
</body></html>
